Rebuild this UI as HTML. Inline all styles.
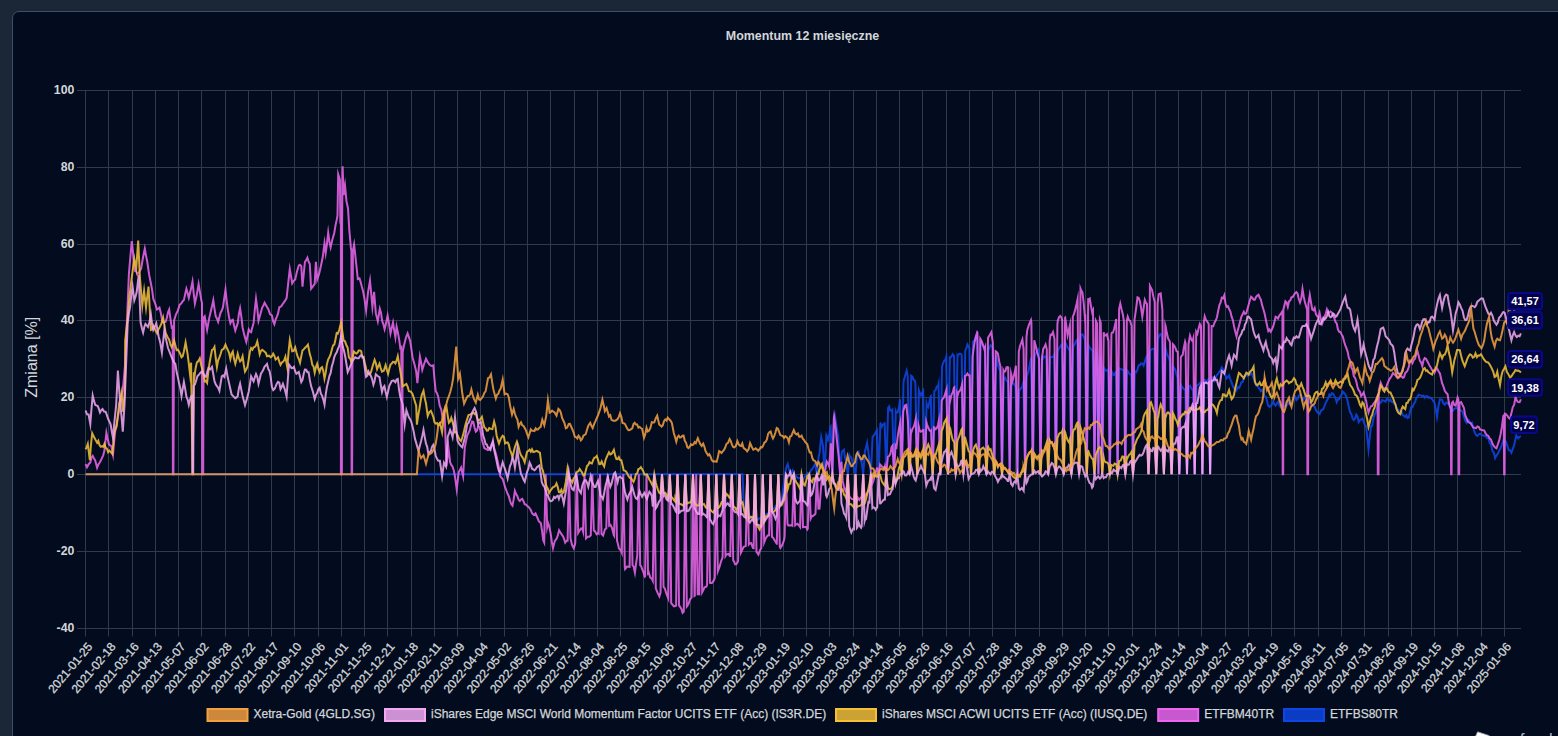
<!DOCTYPE html>
<html lang="pl"><head><meta charset="utf-8"><title>Momentum 12 miesięczne</title>
<style>
html,body{margin:0;padding:0;background:#1b2736;overflow:hidden}
body{width:1558px;height:736px;position:relative;font-family:"Liberation Sans",Arial,sans-serif}
.card{position:absolute;left:12px;top:11px;width:1600px;height:800px;box-sizing:border-box;border:1px solid #3f4f63;border-radius:7px;background:#020c1e}
svg{position:absolute;left:0;top:0}
text{font-family:"Liberation Sans",Arial,sans-serif}
.yt{font-size:12.3px;fill:#d3d6da;font-weight:bold}
.xt{font-size:12px;fill:#d3d6da;stroke:#d3d6da;stroke-width:0.3px}
.lg{font-size:12px;fill:#d3d6da;stroke:#d3d6da;stroke-width:0.25px}
.tt{font-size:12.45px;font-weight:bold;fill:#d3d6da}
  .ya{font-size:16px;fill:#d3d6da}
.lb{font-size:11px;font-weight:bold;fill:#fff}
.logo{position:absolute;left:1478px;top:730px;font-size:17px;color:#aeb4bb;white-space:nowrap;line-height:17px}
.logo b{color:#d89a20;font-weight:normal}
</style></head><body>
<div class="card"></div>
<svg width="1558" height="736" viewBox="0 0 1558 736">
<defs><filter id="bl" x="0" y="0" width="1558" height="736" filterUnits="userSpaceOnUse"><feGaussianBlur stdDeviation="0.45"/></filter></defs>
<line x1="85.5" y1="90" x2="85.5" y2="636.5" stroke="#2f3b4b" stroke-width="1"/>
<line x1="108.5" y1="90" x2="108.5" y2="636.5" stroke="#2f3b4b" stroke-width="1"/>
<line x1="132.5" y1="90" x2="132.5" y2="636.5" stroke="#2f3b4b" stroke-width="1"/>
<line x1="155.5" y1="90" x2="155.5" y2="636.5" stroke="#2f3b4b" stroke-width="1"/>
<line x1="178.5" y1="90" x2="178.5" y2="636.5" stroke="#2f3b4b" stroke-width="1"/>
<line x1="201.5" y1="90" x2="201.5" y2="636.5" stroke="#2f3b4b" stroke-width="1"/>
<line x1="225.5" y1="90" x2="225.5" y2="636.5" stroke="#2f3b4b" stroke-width="1"/>
<line x1="248.5" y1="90" x2="248.5" y2="636.5" stroke="#2f3b4b" stroke-width="1"/>
<line x1="271.5" y1="90" x2="271.5" y2="636.5" stroke="#2f3b4b" stroke-width="1"/>
<line x1="294.5" y1="90" x2="294.5" y2="636.5" stroke="#2f3b4b" stroke-width="1"/>
<line x1="318.5" y1="90" x2="318.5" y2="636.5" stroke="#2f3b4b" stroke-width="1"/>
<line x1="341.5" y1="90" x2="341.5" y2="636.5" stroke="#2f3b4b" stroke-width="1"/>
<line x1="364.5" y1="90" x2="364.5" y2="636.5" stroke="#2f3b4b" stroke-width="1"/>
<line x1="387.5" y1="90" x2="387.5" y2="636.5" stroke="#2f3b4b" stroke-width="1"/>
<line x1="411.5" y1="90" x2="411.5" y2="636.5" stroke="#2f3b4b" stroke-width="1"/>
<line x1="434.5" y1="90" x2="434.5" y2="636.5" stroke="#2f3b4b" stroke-width="1"/>
<line x1="457.5" y1="90" x2="457.5" y2="636.5" stroke="#2f3b4b" stroke-width="1"/>
<line x1="480.5" y1="90" x2="480.5" y2="636.5" stroke="#2f3b4b" stroke-width="1"/>
<line x1="504.5" y1="90" x2="504.5" y2="636.5" stroke="#2f3b4b" stroke-width="1"/>
<line x1="527.5" y1="90" x2="527.5" y2="636.5" stroke="#2f3b4b" stroke-width="1"/>
<line x1="550.5" y1="90" x2="550.5" y2="636.5" stroke="#2f3b4b" stroke-width="1"/>
<line x1="574.5" y1="90" x2="574.5" y2="636.5" stroke="#2f3b4b" stroke-width="1"/>
<line x1="597.5" y1="90" x2="597.5" y2="636.5" stroke="#2f3b4b" stroke-width="1"/>
<line x1="620.5" y1="90" x2="620.5" y2="636.5" stroke="#2f3b4b" stroke-width="1"/>
<line x1="643.5" y1="90" x2="643.5" y2="636.5" stroke="#2f3b4b" stroke-width="1"/>
<line x1="667.5" y1="90" x2="667.5" y2="636.5" stroke="#2f3b4b" stroke-width="1"/>
<line x1="690.5" y1="90" x2="690.5" y2="636.5" stroke="#2f3b4b" stroke-width="1"/>
<line x1="713.5" y1="90" x2="713.5" y2="636.5" stroke="#2f3b4b" stroke-width="1"/>
<line x1="736.5" y1="90" x2="736.5" y2="636.5" stroke="#2f3b4b" stroke-width="1"/>
<line x1="760.5" y1="90" x2="760.5" y2="636.5" stroke="#2f3b4b" stroke-width="1"/>
<line x1="783.5" y1="90" x2="783.5" y2="636.5" stroke="#2f3b4b" stroke-width="1"/>
<line x1="806.5" y1="90" x2="806.5" y2="636.5" stroke="#2f3b4b" stroke-width="1"/>
<line x1="829.5" y1="90" x2="829.5" y2="636.5" stroke="#2f3b4b" stroke-width="1"/>
<line x1="853.5" y1="90" x2="853.5" y2="636.5" stroke="#2f3b4b" stroke-width="1"/>
<line x1="876.5" y1="90" x2="876.5" y2="636.5" stroke="#2f3b4b" stroke-width="1"/>
<line x1="899.5" y1="90" x2="899.5" y2="636.5" stroke="#2f3b4b" stroke-width="1"/>
<line x1="922.5" y1="90" x2="922.5" y2="636.5" stroke="#2f3b4b" stroke-width="1"/>
<line x1="946.5" y1="90" x2="946.5" y2="636.5" stroke="#2f3b4b" stroke-width="1"/>
<line x1="969.5" y1="90" x2="969.5" y2="636.5" stroke="#2f3b4b" stroke-width="1"/>
<line x1="992.5" y1="90" x2="992.5" y2="636.5" stroke="#2f3b4b" stroke-width="1"/>
<line x1="1015.5" y1="90" x2="1015.5" y2="636.5" stroke="#2f3b4b" stroke-width="1"/>
<line x1="1039.5" y1="90" x2="1039.5" y2="636.5" stroke="#2f3b4b" stroke-width="1"/>
<line x1="1062.5" y1="90" x2="1062.5" y2="636.5" stroke="#2f3b4b" stroke-width="1"/>
<line x1="1085.5" y1="90" x2="1085.5" y2="636.5" stroke="#2f3b4b" stroke-width="1"/>
<line x1="1108.5" y1="90" x2="1108.5" y2="636.5" stroke="#2f3b4b" stroke-width="1"/>
<line x1="1132.5" y1="90" x2="1132.5" y2="636.5" stroke="#2f3b4b" stroke-width="1"/>
<line x1="1155.5" y1="90" x2="1155.5" y2="636.5" stroke="#2f3b4b" stroke-width="1"/>
<line x1="1178.5" y1="90" x2="1178.5" y2="636.5" stroke="#2f3b4b" stroke-width="1"/>
<line x1="1201.5" y1="90" x2="1201.5" y2="636.5" stroke="#2f3b4b" stroke-width="1"/>
<line x1="1225.5" y1="90" x2="1225.5" y2="636.5" stroke="#2f3b4b" stroke-width="1"/>
<line x1="1248.5" y1="90" x2="1248.5" y2="636.5" stroke="#2f3b4b" stroke-width="1"/>
<line x1="1271.5" y1="90" x2="1271.5" y2="636.5" stroke="#2f3b4b" stroke-width="1"/>
<line x1="1294.5" y1="90" x2="1294.5" y2="636.5" stroke="#2f3b4b" stroke-width="1"/>
<line x1="1318.5" y1="90" x2="1318.5" y2="636.5" stroke="#2f3b4b" stroke-width="1"/>
<line x1="1341.5" y1="90" x2="1341.5" y2="636.5" stroke="#2f3b4b" stroke-width="1"/>
<line x1="1364.5" y1="90" x2="1364.5" y2="636.5" stroke="#2f3b4b" stroke-width="1"/>
<line x1="1388.5" y1="90" x2="1388.5" y2="636.5" stroke="#2f3b4b" stroke-width="1"/>
<line x1="1411.5" y1="90" x2="1411.5" y2="636.5" stroke="#2f3b4b" stroke-width="1"/>
<line x1="1434.5" y1="90" x2="1434.5" y2="636.5" stroke="#2f3b4b" stroke-width="1"/>
<line x1="1457.5" y1="90" x2="1457.5" y2="636.5" stroke="#2f3b4b" stroke-width="1"/>
<line x1="1481.5" y1="90" x2="1481.5" y2="636.5" stroke="#2f3b4b" stroke-width="1"/>
<line x1="1504.5" y1="90" x2="1504.5" y2="636.5" stroke="#2f3b4b" stroke-width="1"/>
<line x1="77" y1="90.5" x2="1521.0" y2="90.5" stroke="#2f3b4b" stroke-width="1"/>
<text x="74.4" y="94.0" text-anchor="end" class="yt">100</text>
<line x1="77" y1="167.5" x2="1521.0" y2="167.5" stroke="#2f3b4b" stroke-width="1"/>
<text x="74.4" y="171.0" text-anchor="end" class="yt">80</text>
<line x1="77" y1="244.5" x2="1521.0" y2="244.5" stroke="#2f3b4b" stroke-width="1"/>
<text x="74.4" y="248.0" text-anchor="end" class="yt">60</text>
<line x1="77" y1="320.5" x2="1521.0" y2="320.5" stroke="#2f3b4b" stroke-width="1"/>
<text x="74.4" y="324.0" text-anchor="end" class="yt">40</text>
<line x1="77" y1="397.5" x2="1521.0" y2="397.5" stroke="#2f3b4b" stroke-width="1"/>
<text x="74.4" y="401.0" text-anchor="end" class="yt">20</text>
<line x1="77" y1="474.5" x2="1521.0" y2="474.5" stroke="#2f3b4b" stroke-width="1"/>
<text x="74.4" y="478.0" text-anchor="end" class="yt">0</text>
<line x1="77" y1="551.5" x2="1521.0" y2="551.5" stroke="#2f3b4b" stroke-width="1"/>
<text x="74.4" y="555.0" text-anchor="end" class="yt">-20</text>
<line x1="77" y1="628.5" x2="1521.0" y2="628.5" stroke="#2f3b4b" stroke-width="1"/>
<text x="74.4" y="632.0" text-anchor="end" class="yt">-40</text>
<text class="xt" text-anchor="end" transform="translate(93.1,647.0) rotate(-50)">2021-01-25</text>
<text class="xt" text-anchor="end" transform="translate(116.4,647.0) rotate(-50)">2021-02-18</text>
<text class="xt" text-anchor="end" transform="translate(139.6,647.0) rotate(-50)">2021-03-16</text>
<text class="xt" text-anchor="end" transform="translate(162.9,647.0) rotate(-50)">2021-04-13</text>
<text class="xt" text-anchor="end" transform="translate(186.1,647.0) rotate(-50)">2021-05-07</text>
<text class="xt" text-anchor="end" transform="translate(209.4,647.0) rotate(-50)">2021-06-02</text>
<text class="xt" text-anchor="end" transform="translate(232.6,647.0) rotate(-50)">2021-06-28</text>
<text class="xt" text-anchor="end" transform="translate(255.9,647.0) rotate(-50)">2021-07-22</text>
<text class="xt" text-anchor="end" transform="translate(279.2,647.0) rotate(-50)">2021-08-17</text>
<text class="xt" text-anchor="end" transform="translate(302.4,647.0) rotate(-50)">2021-09-10</text>
<text class="xt" text-anchor="end" transform="translate(325.7,647.0) rotate(-50)">2021-10-06</text>
<text class="xt" text-anchor="end" transform="translate(348.9,647.0) rotate(-50)">2021-11-01</text>
<text class="xt" text-anchor="end" transform="translate(372.2,647.0) rotate(-50)">2021-11-25</text>
<text class="xt" text-anchor="end" transform="translate(395.4,647.0) rotate(-50)">2021-12-21</text>
<text class="xt" text-anchor="end" transform="translate(418.7,647.0) rotate(-50)">2022-01-18</text>
<text class="xt" text-anchor="end" transform="translate(442.0,647.0) rotate(-50)">2022-02-11</text>
<text class="xt" text-anchor="end" transform="translate(465.2,647.0) rotate(-50)">2022-03-09</text>
<text class="xt" text-anchor="end" transform="translate(488.5,647.0) rotate(-50)">2022-04-04</text>
<text class="xt" text-anchor="end" transform="translate(511.7,647.0) rotate(-50)">2022-05-02</text>
<text class="xt" text-anchor="end" transform="translate(535.0,647.0) rotate(-50)">2022-05-26</text>
<text class="xt" text-anchor="end" transform="translate(558.2,647.0) rotate(-50)">2022-06-21</text>
<text class="xt" text-anchor="end" transform="translate(581.5,647.0) rotate(-50)">2022-07-14</text>
<text class="xt" text-anchor="end" transform="translate(604.8,647.0) rotate(-50)">2022-08-04</text>
<text class="xt" text-anchor="end" transform="translate(628.0,647.0) rotate(-50)">2022-08-25</text>
<text class="xt" text-anchor="end" transform="translate(651.3,647.0) rotate(-50)">2022-09-15</text>
<text class="xt" text-anchor="end" transform="translate(674.5,647.0) rotate(-50)">2022-10-06</text>
<text class="xt" text-anchor="end" transform="translate(697.8,647.0) rotate(-50)">2022-10-27</text>
<text class="xt" text-anchor="end" transform="translate(721.0,647.0) rotate(-50)">2022-11-17</text>
<text class="xt" text-anchor="end" transform="translate(744.3,647.0) rotate(-50)">2022-12-08</text>
<text class="xt" text-anchor="end" transform="translate(767.6,647.0) rotate(-50)">2022-12-29</text>
<text class="xt" text-anchor="end" transform="translate(790.8,647.0) rotate(-50)">2023-01-19</text>
<text class="xt" text-anchor="end" transform="translate(814.1,647.0) rotate(-50)">2023-02-10</text>
<text class="xt" text-anchor="end" transform="translate(837.3,647.0) rotate(-50)">2023-03-03</text>
<text class="xt" text-anchor="end" transform="translate(860.6,647.0) rotate(-50)">2023-03-24</text>
<text class="xt" text-anchor="end" transform="translate(883.9,647.0) rotate(-50)">2023-04-14</text>
<text class="xt" text-anchor="end" transform="translate(907.1,647.0) rotate(-50)">2023-05-05</text>
<text class="xt" text-anchor="end" transform="translate(930.4,647.0) rotate(-50)">2023-05-26</text>
<text class="xt" text-anchor="end" transform="translate(953.6,647.0) rotate(-50)">2023-06-16</text>
<text class="xt" text-anchor="end" transform="translate(976.9,647.0) rotate(-50)">2023-07-07</text>
<text class="xt" text-anchor="end" transform="translate(1000.1,647.0) rotate(-50)">2023-07-28</text>
<text class="xt" text-anchor="end" transform="translate(1023.4,647.0) rotate(-50)">2023-08-18</text>
<text class="xt" text-anchor="end" transform="translate(1046.7,647.0) rotate(-50)">2023-09-08</text>
<text class="xt" text-anchor="end" transform="translate(1069.9,647.0) rotate(-50)">2023-09-29</text>
<text class="xt" text-anchor="end" transform="translate(1093.2,647.0) rotate(-50)">2023-10-20</text>
<text class="xt" text-anchor="end" transform="translate(1116.4,647.0) rotate(-50)">2023-11-10</text>
<text class="xt" text-anchor="end" transform="translate(1139.7,647.0) rotate(-50)">2023-12-01</text>
<text class="xt" text-anchor="end" transform="translate(1162.9,647.0) rotate(-50)">2023-12-24</text>
<text class="xt" text-anchor="end" transform="translate(1186.2,647.0) rotate(-50)">2024-01-14</text>
<text class="xt" text-anchor="end" transform="translate(1209.5,647.0) rotate(-50)">2024-02-04</text>
<text class="xt" text-anchor="end" transform="translate(1232.7,647.0) rotate(-50)">2024-02-27</text>
<text class="xt" text-anchor="end" transform="translate(1256.0,647.0) rotate(-50)">2024-03-22</text>
<text class="xt" text-anchor="end" transform="translate(1279.2,647.0) rotate(-50)">2024-04-19</text>
<text class="xt" text-anchor="end" transform="translate(1302.5,647.0) rotate(-50)">2024-05-16</text>
<text class="xt" text-anchor="end" transform="translate(1325.7,647.0) rotate(-50)">2024-06-11</text>
<text class="xt" text-anchor="end" transform="translate(1349.0,647.0) rotate(-50)">2024-07-05</text>
<text class="xt" text-anchor="end" transform="translate(1372.3,647.0) rotate(-50)">2024-07-31</text>
<text class="xt" text-anchor="end" transform="translate(1395.5,647.0) rotate(-50)">2024-08-26</text>
<text class="xt" text-anchor="end" transform="translate(1418.8,647.0) rotate(-50)">2024-09-19</text>
<text class="xt" text-anchor="end" transform="translate(1442.0,647.0) rotate(-50)">2024-10-15</text>
<text class="xt" text-anchor="end" transform="translate(1465.3,647.0) rotate(-50)">2024-11-08</text>
<text class="xt" text-anchor="end" transform="translate(1488.5,647.0) rotate(-50)">2024-12-04</text>
<text class="xt" text-anchor="end" transform="translate(1511.8,647.0) rotate(-50)">2025-01-06</text>
<g filter="url(#bl)">
<polyline fill="none" stroke="#0e46e6" stroke-width="2" stroke-opacity="0.86" stroke-linejoin="miter" stroke-miterlimit="10" points="85.6,474.3 742.5,474.3 744.0,510.9 745.4,512.8 746.9,513.9 748.4,514.0 749.8,516.1 751.3,517.2 752.8,518.8 754.2,518.2 755.7,519.7 757.2,520.5 758.6,518.5 760.1,518.5 761.6,517.5 763.0,517.4 764.5,514.4 766.1,514.0 767.8,513.8 769.4,511.4 771.0,510.6 772.6,509.6 774.3,508.1 775.7,505.9 777.2,506.8 778.7,504.2 780.1,502.5 781.6,500.5 783.4,486.6 785.3,472.4 786.5,466.9 787.7,464.0 788.9,469.3 790.2,472.5 791.4,472.9 792.6,470.3 794.4,474.3 796.3,476.3 797.9,478.1 799.5,477.9 801.2,479.2 803.0,479.4 804.8,476.8 806.7,474.0 807.5,473.0 809.2,474.3 811.0,470.2 812.2,469.1 814.0,465.9 815.2,463.6 816.9,474.3 818.7,456.5 819.5,453.6 821.2,437.0 822.9,445.1 824.6,474.3 826.4,435.2 826.8,436.1 828.0,439.6 829.2,434.7 830.5,426.1 830.6,426.0 832.4,474.3 834.1,417.4 834.9,415.2 836.6,427.1 837.8,434.2 838.3,437.5 840.1,474.3 841.8,451.9 842.7,450.6 843.9,449.6 845.1,458.2 846.0,460.5 847.8,474.3 849.5,455.6 850.0,456.8 851.2,457.2 852.5,461.7 853.7,467.0 853.7,466.8 855.5,474.3 857.2,453.2 857.4,453.0 858.6,451.8 859.8,457.9 861.0,460.9 861.4,460.1 863.2,474.3 864.9,451.5 865.9,447.8 867.1,442.9 868.4,452.2 869.1,458.4 870.9,474.3 872.6,436.6 873.3,436.2 874.5,434.6 875.7,432.3 876.9,430.2 878.6,474.3 880.4,423.8 880.6,423.6 881.8,426.7 883.0,424.4 884.3,424.1 884.6,422.3 886.3,474.3 888.1,408.0 889.1,406.4 890.4,410.7 891.6,410.6 892.3,409.8 894.0,474.3 895.8,411.3 896.5,413.1 897.7,412.4 898.9,407.6 900.0,399.3 901.7,474.3 903.5,382.0 903.8,380.2 905.3,375.3 906.7,370.6 907.7,375.8 909.5,474.3 911.2,375.7 912.4,376.6 913.6,380.0 914.8,380.5 915.4,383.2 917.2,474.3 918.9,390.5 919.7,393.0 920.9,395.3 922.2,392.8 923.1,391.0 924.9,474.3 926.6,403.6 927.0,405.2 928.3,407.1 929.5,401.4 930.7,396.3 930.8,396.2 932.6,474.3 934.3,391.1 934.4,391.0 935.6,390.3 936.8,386.5 938.0,386.4 938.5,384.2 940.3,474.3 942.0,367.1 942.9,363.6 944.2,360.8 945.4,359.7 946.2,357.0 948.0,474.3 949.8,357.6 950.3,358.0 951.5,356.3 952.7,354.2 953.9,356.1 954.0,356.1 955.7,474.3 957.5,356.2 957.6,356.4 958.8,354.2 960.0,353.6 961.3,354.2 961.7,355.4 963.4,474.3 965.2,351.1 966.2,348.7 967.4,344.5 968.6,346.8 969.4,348.0 971.1,474.3 972.9,341.8 973.5,341.2 974.7,340.0 975.9,336.4 977.1,334.1 978.8,474.3 980.6,342.9 980.8,343.3 982.1,344.1 983.3,345.5 984.5,346.5 984.8,346.7 986.5,474.3 988.3,350.3 989.4,348.0 990.6,345.2 991.8,346.2 992.5,347.2 994.3,474.3 996.0,355.3 996.7,359.2 997.9,365.6 999.2,368.6 1000.2,371.5 1002.0,474.3 1003.7,377.8 1004.1,379.1 1005.3,377.9 1006.5,380.6 1007.7,381.7 1007.9,382.1 1009.7,474.3 1011.4,385.7 1012.6,383.7 1013.8,383.4 1015.1,385.8 1015.6,387.1 1017.4,474.3 1019.1,390.5 1020.0,389.5 1021.2,388.2 1022.4,386.3 1023.3,382.2 1025.1,474.3 1026.8,375.8 1027.3,375.3 1028.5,371.4 1029.7,364.9 1031.0,358.6 1031.1,358.6 1032.8,474.3 1034.6,356.3 1034.6,356.3 1035.8,353.6 1037.1,351.7 1038.3,349.3 1038.8,350.3 1040.5,474.3 1042.3,357.2 1043.2,358.4 1044.4,356.5 1045.6,356.4 1046.5,358.7 1048.2,474.3 1050.0,357.3 1050.5,357.4 1051.7,357.1 1053.0,357.0 1054.2,354.6 1054.2,354.6 1055.9,474.3 1057.7,351.6 1057.8,351.4 1059.1,348.1 1060.3,346.6 1061.5,344.7 1061.9,344.6 1063.7,474.3 1065.4,342.8 1066.4,345.0 1067.6,347.0 1068.9,349.5 1069.6,349.4 1071.4,474.3 1073.1,346.3 1073.7,345.9 1075.0,343.9 1076.2,340.6 1077.3,339.6 1079.1,474.3 1080.8,334.9 1081.1,334.8 1082.3,334.2 1083.5,336.3 1084.7,339.3 1085.0,340.2 1086.8,474.3 1088.5,345.3 1089.6,347.5 1090.9,348.8 1092.1,350.4 1092.7,351.2 1094.5,474.3 1096.2,352.2 1096.7,352.8 1098.4,474.3 1100.2,355.5 1100.5,357.2 1102.2,474.3 1104.0,368.1 1104.4,368.9 1105.7,370.3 1106.9,370.8 1108.1,369.5 1108.2,369.4 1109.9,474.3 1111.7,371.5 1111.8,371.7 1113.0,374.4 1114.2,374.9 1115.5,372.2 1115.9,371.9 1117.6,474.3 1119.4,368.4 1120.3,368.9 1121.6,369.3 1122.8,369.8 1123.6,371.0 1125.3,474.3 1127.1,370.5 1127.7,371.0 1128.9,373.0 1130.1,374.5 1131.3,374.5 1133.0,474.3 1134.8,371.2 1135.0,371.4 1136.2,372.3 1137.5,369.3 1138.7,365.3 1139.9,365.3 1141.1,363.3 1142.3,363.5 1143.6,365.6 1144.8,361.5 1146.0,357.9 1146.7,356.4 1148.5,474.3 1150.2,351.0 1150.9,350.1 1152.1,348.9 1153.3,348.9 1154.4,348.4 1156.2,474.3 1157.9,339.1 1158.2,338.5 1159.5,334.7 1160.7,334.0 1161.9,337.4 1162.1,338.1 1163.9,474.3 1165.6,348.5 1166.8,353.0 1168.0,356.2 1169.2,358.8 1169.8,360.8 1171.6,474.3 1173.3,366.7 1174.1,368.2 1175.4,369.9 1176.6,375.1 1177.5,377.4 1179.3,474.3 1181.0,385.1 1181.5,386.0 1182.7,387.7 1183.9,388.9 1185.1,389.8 1185.3,389.7 1187.0,474.3 1188.8,387.1 1188.8,387.1 1190.0,385.7 1191.2,387.9 1192.5,389.8 1193.0,389.7 1194.7,474.3 1196.5,385.4 1197.4,385.3 1198.6,384.5 1199.8,383.0 1200.7,382.3 1202.4,474.3 1204.2,379.7 1204.7,379.8 1205.9,382.1 1207.1,380.8 1208.4,379.4 1208.4,379.4 1210.1,474.3 1211.9,377.8 1212.0,377.5 1213.3,377.3 1214.5,380.4 1215.7,377.7 1216.9,375.1 1218.1,373.9 1219.4,371.6 1220.6,370.2 1221.8,367.4 1223.0,369.4 1224.3,373.2 1225.5,375.3 1226.7,378.4 1227.9,377.2 1229.1,375.3 1230.4,379.6 1231.6,382.3 1232.8,386.0 1234.0,388.3 1235.3,388.4 1236.5,390.3 1237.7,387.0 1238.9,388.0 1240.1,386.1 1241.4,382.2 1242.6,382.1 1243.8,377.9 1245.0,374.7 1246.3,374.7 1247.5,375.7 1248.7,374.0 1249.9,374.7 1251.1,372.2 1252.4,375.2 1253.6,378.3 1254.8,380.7 1256.0,385.5 1257.3,386.0 1258.5,387.7 1259.7,389.1 1260.9,391.1 1262.2,389.9 1263.4,392.8 1264.6,396.3 1265.8,396.8 1267.0,401.1 1268.3,405.8 1269.5,407.0 1270.7,405.7 1271.9,404.4 1273.2,401.4 1274.4,404.4 1275.6,405.6 1276.8,403.5 1278.0,401.8 1279.3,405.0 1280.5,406.9 1281.7,405.0 1282.9,404.6 1284.2,406.4 1285.4,406.7 1286.6,405.9 1287.8,401.4 1289.0,403.9 1290.3,404.5 1291.5,403.9 1292.7,399.5 1293.9,397.9 1295.2,396.7 1296.4,400.1 1297.6,398.9 1298.8,395.6 1300.0,394.8 1301.3,396.3 1302.5,400.5 1303.7,399.0 1304.9,396.4 1306.2,399.4 1307.4,401.5 1308.6,401.6 1309.8,402.5 1311.1,403.4 1312.3,404.8 1313.5,406.1 1314.7,406.8 1315.9,410.0 1317.2,412.1 1318.4,413.2 1319.6,414.1 1320.8,410.9 1322.1,409.7 1323.3,409.2 1324.5,406.0 1325.7,402.9 1326.9,400.5 1328.2,398.3 1329.4,394.6 1330.6,395.7 1331.8,393.2 1333.1,393.5 1334.3,395.9 1335.5,398.1 1336.7,402.1 1337.9,399.3 1339.2,399.3 1340.4,396.1 1341.6,394.8 1342.8,391.7 1344.1,393.0 1345.3,394.5 1346.5,397.1 1347.7,401.6 1348.9,407.5 1350.2,412.4 1351.4,414.3 1352.6,418.6 1353.8,420.1 1355.1,418.4 1356.3,414.6 1357.5,416.5 1358.7,422.1 1360.0,420.1 1361.2,419.5 1362.4,418.6 1363.6,421.7 1364.8,424.5 1366.1,426.2 1367.3,438.0 1368.5,449.5 1369.7,437.9 1371.0,426.4 1372.2,425.6 1373.4,418.3 1374.6,414.7 1375.8,412.2 1377.1,407.7 1378.3,403.6 1379.5,403.8 1380.7,402.7 1382.0,400.2 1383.2,400.5 1384.4,401.0 1385.6,401.6 1386.8,398.8 1388.1,399.8 1389.3,400.9 1390.5,399.6 1391.7,401.8 1393.0,402.2 1394.2,403.7 1395.4,404.4 1396.6,408.3 1397.8,409.2 1399.1,410.9 1400.3,411.0 1401.5,411.6 1402.7,415.3 1404.0,415.8 1405.2,417.0 1406.4,415.2 1407.6,418.1 1408.9,417.3 1410.1,411.3 1411.3,407.0 1412.5,407.1 1413.7,404.1 1415.0,402.1 1416.2,398.5 1417.4,396.7 1418.6,394.8 1419.9,395.2 1421.1,395.5 1422.3,396.5 1423.5,395.6 1424.7,397.6 1426.0,396.3 1427.2,396.2 1428.4,397.8 1429.6,397.4 1430.9,398.2 1432.1,399.0 1433.3,401.1 1434.5,402.6 1435.7,408.9 1437.0,416.9 1438.4,406.5 1439.9,399.2 1442.1,399.8 1443.5,403.7 1444.8,404.8 1446.2,402.5 1447.6,403.5 1448.9,404.0 1450.3,407.6 1451.6,411.2 1453.0,410.6 1454.3,408.9 1455.7,408.2 1457.1,408.0 1458.4,409.2 1459.8,410.0 1461.1,410.7 1462.5,411.6 1463.9,416.2 1465.2,420.9 1466.6,422.9 1467.9,419.7 1469.3,420.9 1470.7,423.6 1472.0,422.7 1473.4,428.2 1474.7,432.4 1476.1,435.2 1477.4,435.9 1478.8,434.3 1480.2,433.7 1481.5,434.9 1482.9,435.2 1484.2,435.9 1485.6,436.0 1487.0,438.1 1488.3,437.8 1489.7,442.8 1491.0,444.5 1492.4,450.9 1493.8,452.7 1495.1,458.1 1496.5,455.2 1497.8,454.0 1499.2,450.7 1500.5,448.3 1501.9,444.6 1503.3,440.5 1504.6,440.8 1506.0,441.8 1507.3,445.6 1508.7,450.1 1510.1,450.3 1511.4,452.8 1512.8,448.8 1514.1,445.3 1516.3,435.5 1518.2,438.4 1519.6,436.8 1520.9,436.2"/>
<polyline fill="none" stroke="#ee66ee" stroke-width="2" stroke-opacity="0.86" stroke-linejoin="miter" stroke-miterlimit="10" points="85.6,464.2 87.0,467.2 88.6,464.2 90.3,462.6 91.5,457.5 92.7,455.9 93.9,458.3 95.2,460.4 97.1,467.8 98.3,464.6 99.6,462.8 100.8,460.6 102.0,457.9 103.2,455.3 104.4,450.8 106.4,432.6 107.6,438.5 108.9,444.2 110.1,445.4 111.3,446.1 113.0,454.5 114.2,440.9 115.5,428.7 116.7,423.5 117.9,416.8 119.1,410.8 120.3,405.0 121.6,396.1 122.8,389.9 124.0,377.4 125.2,363.1 125.2,361.3 127.1,317.7 128.9,274.0 130.4,256.4 131.8,241.1 133.4,256.0 135.0,271.0 136.2,271.3 137.5,274.3 139.3,271.8 141.1,268.6 143.0,257.5 144.8,248.7 146.0,255.6 147.2,261.5 149.1,274.4 150.9,283.5 152.1,289.9 153.3,298.9 155.2,303.6 157.0,309.5 158.2,308.8 159.5,307.6 160.7,312.4 161.9,319.0 163.1,322.5 164.4,322.3 165.6,321.8 166.8,318.0 168.0,312.4 169.2,309.5 170.5,319.1 171.7,327.3 172.7,326.7 172.9,474.3 173.4,474.3 174.1,320.5 176.0,314.3 177.8,310.8 179.6,304.9 181.5,303.2 182.7,301.2 183.9,300.1 185.1,294.4 186.4,288.7 187.6,292.9 188.8,297.8 190.6,290.6 192.5,281.6 193.7,293.4 194.9,303.5 196.7,295.3 198.6,284.1 199.8,291.4 201.0,298.5 202.0,303.3 202.2,474.3 203.2,474.3 203.7,317.3 204.7,316.2 205.9,323.4 207.1,330.0 209.0,319.1 210.8,311.3 212.0,306.3 213.3,300.2 214.5,308.8 215.7,316.4 216.9,318.5 218.1,321.8 219.4,316.9 220.6,312.7 221.8,310.5 223.0,307.2 224.3,297.9 225.5,289.7 226.7,301.0 227.9,310.4 229.1,317.5 230.4,323.2 231.6,320.5 232.8,319.8 234.0,325.2 235.3,330.5 236.5,326.8 237.7,323.4 238.9,314.0 240.1,308.4 241.4,317.2 242.6,327.7 244.4,335.4 246.3,341.9 247.5,336.0 248.7,329.6 249.9,331.6 251.1,332.2 252.4,327.2 253.6,322.9 254.8,309.9 256.0,298.9 257.3,308.7 258.5,320.8 260.3,314.5 262.2,307.6 263.4,305.5 264.6,302.8 266.4,305.9 268.3,309.2 270.1,314.3 271.9,315.3 273.2,321.4 274.4,324.2 275.6,319.6 276.8,316.8 278.0,313.7 279.3,307.2 281.1,306.5 282.9,303.7 284.8,301.2 286.6,298.2 288.2,283.4 289.8,269.1 291.0,276.0 292.2,283.4 293.7,280.8 295.2,279.4 297.0,271.4 298.8,265.5 300.0,264.7 301.3,266.2 302.5,286.7 303.7,274.3 304.9,262.0 306.2,260.2 307.4,257.8 308.6,261.7 309.8,264.0 311.1,288.7 312.9,286.4 314.7,283.9 315.9,261.7 317.2,279.4 319.0,274.1 320.8,266.5 322.7,257.3 324.5,243.2 325.7,252.9 326.9,244.3 328.2,232.6 329.4,241.7 330.6,247.3 332.4,239.5 334.3,232.7 335.5,225.4 336.7,219.9 337.5,215.7 338.2,174.3 339.9,179.7 340.4,223.1 340.9,223.5 340.9,474.3 341.9,474.3 342.1,223.1 342.6,166.3 343.6,195.1 345.0,185.4 346.5,201.4 348.0,208.2 349.4,231.2 350.9,247.9 351.4,250.9 351.6,474.3 352.1,474.3 352.9,250.7 354.1,244.4 355.8,260.0 357.8,279.1 359.5,278.3 360.7,282.2 361.9,287.0 363.1,291.3 364.4,298.2 366.1,310.6 368.0,292.4 370.0,280.6 371.2,293.4 372.4,306.9 374.1,291.8 375.8,313.2 377.8,321.3 379.8,308.8 381.0,312.8 382.2,321.2 383.4,324.3 384.6,329.3 386.1,323.1 387.6,315.6 389.0,323.7 390.5,333.6 391.7,328.1 393.0,322.5 394.2,330.4 395.4,337.4 396.6,326.6 397.8,332.1 399.1,339.2 400.3,348.2 401.3,347.2 401.5,474.3 402.0,474.3 402.7,352.0 404.0,345.4 405.2,340.4 406.4,336.3 407.6,333.4 408.9,337.1 410.1,340.7 411.3,348.3 412.5,357.2 414.4,363.9 416.2,371.6 417.4,383.1 418.6,369.9 419.9,356.6 421.1,362.5 422.3,369.8 424.1,364.0 426.0,358.8 427.8,362.2 429.6,364.8 431.5,366.0 433.3,365.3 434.5,379.3 435.7,391.1 437.0,393.1 438.2,396.7 439.7,405.7 441.3,409.7 442.8,418.9 444.5,411.1 446.5,466.5 448.4,447.5 450.1,462.2 451.3,464.9 452.6,466.7 453.8,470.4 455.0,476.7 456.7,489.3 458.7,472.2 459.9,470.1 461.1,467.5 463.1,476.2 464.8,447.3 466.0,441.6 467.2,435.6 468.5,432.9 469.7,430.5 470.9,425.5 472.1,421.5 473.3,421.8 474.6,427.8 475.8,431.6 477.0,430.4 478.2,426.5 479.5,426.6 480.7,431.8 481.9,439.7 483.1,443.9 484.4,448.2 486.2,449.1 488.0,450.1 489.2,449.7 490.5,447.5 491.7,444.0 492.9,442.4 494.1,447.7 495.4,452.1 496.6,456.4 497.8,461.9 499.0,467.8 500.2,476.2 501.5,477.8 502.7,479.0 503.9,482.9 505.1,487.2 506.4,490.5 507.6,493.8 508.8,496.2 510.0,500.6 511.2,504.0 512.5,505.6 513.7,499.2 514.9,490.9 516.1,494.0 517.4,496.2 518.6,499.8 519.8,501.0 521.0,499.5 522.2,498.8 523.5,501.2 524.7,504.4 525.9,504.5 527.1,505.8 529.0,507.5 530.8,509.9 532.2,513.5 533.9,514.9 535.5,513.5 537.1,517.0 538.9,521.4 540.8,523.1 542.0,530.4 543.2,540.3 544.2,542.5 545.7,474.3 547.2,527.0 548.1,523.1 549.3,526.5 550.6,533.1 551.8,541.7 553.0,548.1 554.8,541.1 556.7,538.5 557.9,535.1 559.1,530.3 561.0,533.4 562.8,536.1 564.0,538.7 565.2,542.7 566.9,540.5 567.6,540.6 569.0,474.3 570.5,538.4 572.0,544.8 573.8,548.3 575.0,544.3 575.3,542.3 576.8,474.3 578.2,532.9 579.5,530.6 581.1,528.4 582.3,528.7 583.1,531.5 584.5,474.3 586.0,538.4 586.0,538.4 587.6,536.7 589.3,536.7 590.8,535.3 592.3,474.3 593.8,530.5 595.0,531.3 596.6,534.2 598.2,532.9 598.6,533.3 600.0,474.3 601.5,533.8 603.1,535.5 605.0,529.3 606.3,528.4 607.8,474.3 609.2,525.7 610.5,524.9 612.1,528.2 613.7,534.9 614.1,535.6 615.5,474.3 617.0,540.8 617.2,541.1 619.0,548.5 620.9,550.5 621.8,552.8 623.3,474.3 624.8,567.0 625.1,569.0 627.0,566.6 628.8,566.8 629.6,566.9 631.0,474.3 632.5,565.2 633.7,566.7 634.9,572.6 636.1,563.5 637.3,555.2 638.8,474.3 640.2,565.3 641.0,566.1 642.2,569.1 643.5,572.5 644.7,576.7 645.1,576.4 646.5,474.3 648.0,572.2 648.4,571.4 650.2,577.4 652.0,579.1 652.8,580.8 654.3,474.3 655.8,588.4 657.5,592.7 659.4,596.3 660.6,592.4 662.0,474.3 663.5,586.8 664.9,588.7 666.7,594.6 668.3,598.4 669.8,474.3 671.2,603.3 672.2,604.3 674.0,606.4 675.9,605.8 676.1,605.6 677.5,474.3 679.0,605.5 679.5,606.0 681.4,608.9 682.6,612.8 683.8,611.6 683.8,611.5 685.3,474.3 686.8,606.6 687.5,605.8 688.7,603.4 689.9,599.5 691.6,597.5 693.0,474.3 694.5,596.0 694.8,595.8 696.2,474.3 697.7,594.2 699.1,594.1 699.3,594.2 700.8,474.3 702.2,592.2 702.8,591.0 704.6,587.2 706.4,586.6 707.1,584.5 708.5,474.3 710.0,582.9 710.1,583.0 711.9,583.0 713.8,580.4 714.8,577.9 716.3,474.3 717.8,571.4 719.3,567.5 721.1,561.2 722.6,557.4 724.0,474.3 725.5,556.1 726.6,554.3 728.4,553.9 730.3,556.8 730.3,556.9 731.8,474.3 733.2,560.6 733.9,561.1 735.2,564.4 736.4,564.2 738.1,561.2 739.5,474.3 741.0,552.4 741.9,550.5 743.7,546.8 745.6,546.1 745.8,546.0 747.3,474.3 748.8,544.3 749.2,543.8 751.1,543.0 752.9,548.0 753.6,548.2 755.0,474.3 756.5,551.9 756.6,552.0 758.4,554.7 760.2,550.0 761.3,548.0 762.8,474.3 764.2,542.3 765.7,538.4 767.6,535.5 769.1,535.4 770.5,474.3 772.0,536.9 773.1,537.7 774.9,540.8 776.7,543.7 776.8,543.7 778.3,474.3 779.8,546.8 780.4,548.0 782.2,545.1 784.1,540.1 784.6,536.3 786.0,474.3 787.5,524.1 788.3,525.5 790.2,525.3 792.0,525.5 792.3,525.7 793.8,474.3 795.2,525.2 795.7,524.7 797.5,523.8 799.3,525.9 800.1,527.1 801.5,474.3 803.0,527.2 803.0,527.2 804.8,527.1 806.1,527.1 807.3,529.5 807.8,528.7 809.2,474.3 810.7,518.5 811.6,516.6 813.4,515.7 815.2,514.0 815.5,513.5 816.9,474.3 818.4,508.7 819.5,508.6 820.7,491.6 822.0,477.1 823.2,476.3 823.2,476.2 824.6,474.3 826.1,464.9 826.8,461.6 828.0,463.4 829.2,466.4 830.5,449.7 830.9,443.4 832.4,474.3 833.8,418.7 834.1,416.4 835.4,425.6 836.6,437.3 837.8,449.0 838.6,455.9 840.1,474.3 841.5,461.8 842.7,480.9 843.9,486.5 845.1,490.0 846.3,492.1 847.8,474.3 849.2,496.1 850.3,497.7 851.9,499.1 853.4,499.3 854.0,500.0 855.5,474.3 856.9,500.7 857.8,497.7 859.3,499.9 860.8,497.5 861.7,497.6 863.2,474.3 864.6,496.1 865.2,495.9 866.7,493.9 868.1,491.2 869.4,490.3 870.9,474.3 872.4,483.3 873.3,481.2 875.1,474.2 876.9,468.2 877.2,468.2 878.6,474.3 880.1,464.5 880.6,465.1 881.8,466.2 883.0,467.1 884.3,468.9 884.9,466.3 886.3,474.3 887.8,457.0 887.9,456.7 889.1,456.0 890.4,453.9 891.6,446.9 892.6,445.6 894.0,474.3 895.5,445.4 896.5,446.9 897.7,436.7 898.9,429.0 900.1,423.5 900.3,422.6 901.7,474.3 903.2,411.4 903.8,409.4 905.0,405.5 906.3,404.8 907.5,416.3 908.0,422.1 909.5,474.3 910.9,432.4 911.1,433.0 912.4,429.1 913.6,427.1 914.8,423.4 915.7,419.3 917.2,474.3 918.6,425.9 919.7,430.6 920.9,431.7 922.2,430.8 923.4,429.3 923.4,429.0 924.9,474.3 926.3,422.0 927.0,424.4 928.3,427.8 929.5,430.3 930.7,431.3 931.1,430.8 932.6,474.3 934.0,427.2 934.4,427.3 935.6,429.3 936.8,428.2 938.0,424.8 938.8,420.7 940.3,474.3 941.7,400.8 942.9,398.5 944.2,396.9 945.4,393.1 946.5,389.5 948.0,474.3 949.5,395.4 950.3,400.4 951.5,394.8 952.7,392.5 953.9,387.6 954.3,387.3 955.7,474.3 957.2,394.1 957.6,395.4 958.8,391.7 960.0,390.7 961.3,387.4 962.0,384.7 963.4,474.3 964.9,376.1 964.9,376.0 966.2,375.5 967.4,373.6 968.6,375.3 969.7,375.4 971.1,474.3 972.6,356.6 973.5,349.4 974.7,341.7 975.9,336.5 977.2,332.2 977.4,332.5 978.8,474.3 980.3,338.6 980.8,339.4 982.1,342.0 983.3,346.1 984.5,349.6 985.1,347.8 986.5,474.3 988.0,337.9 988.2,337.4 989.4,335.4 991.3,332.2 992.8,342.7 994.3,474.3 995.7,351.4 996.7,352.1 997.9,353.7 999.2,361.4 1000.4,366.4 1000.5,366.7 1002.0,474.3 1003.4,370.4 1004.1,371.9 1005.3,371.3 1006.5,367.4 1007.7,367.1 1008.2,367.4 1009.7,474.3 1011.1,373.8 1011.4,375.0 1012.6,380.7 1013.8,376.2 1015.1,370.6 1015.9,365.7 1017.4,474.3 1018.8,351.7 1020.0,346.0 1021.2,342.9 1022.4,339.5 1023.6,348.9 1023.6,349.0 1025.1,474.3 1026.5,337.1 1027.3,330.0 1029.1,324.4 1031.0,320.0 1031.4,322.7 1032.8,474.3 1034.3,340.3 1034.6,341.9 1035.8,345.9 1037.1,352.0 1038.3,356.3 1039.1,358.8 1040.5,474.3 1042.0,358.2 1043.2,348.8 1044.4,347.2 1045.6,344.5 1046.8,349.3 1048.2,474.3 1049.7,340.3 1050.5,334.7 1051.7,334.9 1053.0,332.1 1054.2,337.7 1054.5,338.6 1055.9,474.3 1057.4,324.2 1057.8,320.6 1059.1,317.0 1060.3,316.0 1061.5,317.8 1062.2,320.2 1063.7,474.3 1065.1,317.7 1065.2,317.6 1066.4,326.2 1067.6,335.4 1068.9,329.7 1069.9,325.2 1071.4,474.3 1072.8,316.7 1073.7,314.7 1075.0,310.4 1076.6,303.8 1077.6,299.1 1079.1,474.3 1080.5,288.6 1081.2,290.4 1082.4,292.3 1083.7,303.0 1084.9,317.5 1085.3,314.3 1086.8,474.3 1088.2,299.3 1088.6,299.4 1089.8,298.5 1091.0,306.1 1092.2,312.5 1093.0,310.6 1094.5,474.3 1095.9,320.9 1097.0,323.2 1098.4,474.3 1099.9,320.2 1100.8,323.0 1102.2,474.3 1103.7,332.2 1104.4,336.0 1105.7,335.2 1106.9,334.2 1108.1,339.8 1108.5,340.2 1109.9,474.3 1111.4,334.1 1111.8,332.6 1113.0,332.5 1114.2,328.8 1115.5,322.7 1116.2,318.9 1117.6,474.3 1119.1,309.0 1120.3,303.6 1121.6,309.5 1122.8,314.3 1123.9,321.1 1125.3,474.3 1126.8,321.1 1127.7,316.7 1128.9,320.1 1130.1,320.8 1131.3,324.9 1131.6,325.7 1133.0,474.3 1134.5,319.5 1135.0,316.3 1136.2,307.8 1137.5,297.3 1138.7,297.9 1139.9,301.3 1141.1,307.8 1142.3,316.7 1143.6,308.3 1144.8,299.9 1146.0,302.9 1147.0,303.9 1148.5,474.3 1149.9,285.9 1150.7,287.6 1152.1,290.0 1153.3,296.4 1154.6,301.4 1154.7,302.7 1156.2,474.3 1157.6,303.6 1158.7,294.1 1160.7,293.3 1161.9,305.2 1162.4,310.1 1163.9,474.3 1165.3,325.0 1165.6,326.0 1166.8,332.8 1168.0,338.3 1169.5,340.8 1170.1,343.1 1171.6,474.3 1173.0,344.4 1174.1,345.6 1175.4,347.9 1176.6,351.2 1177.8,351.8 1177.8,351.9 1179.3,474.3 1180.8,357.3 1181.5,356.0 1182.7,354.8 1183.9,347.4 1185.1,341.6 1185.6,343.3 1187.0,474.3 1188.5,344.5 1188.8,342.4 1190.0,335.6 1191.2,339.2 1192.5,341.2 1193.3,338.4 1194.7,474.3 1196.2,331.7 1197.4,333.8 1198.6,328.4 1199.8,323.9 1201.0,326.1 1202.4,474.3 1203.9,321.6 1204.7,316.4 1205.9,319.9 1207.1,321.4 1208.4,323.5 1208.7,324.0 1210.1,474.3 1211.6,326.1 1212.0,326.2 1213.3,326.3 1214.5,322.7 1215.7,320.5 1216.9,317.5 1218.1,311.2 1219.4,305.0 1220.6,302.3 1221.8,297.7 1223.0,298.4 1224.3,295.2 1225.5,303.5 1226.7,306.9 1227.9,306.2 1229.1,309.0 1230.4,311.5 1231.6,316.7 1232.8,319.9 1234.0,326.0 1235.3,331.7 1236.5,336.3 1237.7,330.5 1238.9,326.3 1240.1,321.5 1241.4,316.7 1242.6,314.2 1243.8,311.7 1245.0,314.0 1246.3,313.4 1247.5,308.8 1248.7,304.5 1249.9,300.3 1251.1,296.8 1252.4,297.9 1253.6,299.7 1254.8,299.7 1256.0,297.0 1257.3,295.6 1258.5,294.8 1259.7,297.5 1260.9,299.8 1262.2,305.4 1263.4,309.2 1264.6,313.6 1265.8,319.4 1267.0,325.3 1268.3,331.1 1269.5,329.6 1270.7,331.7 1271.9,329.5 1273.2,326.4 1274.4,322.0 1275.6,316.8 1276.8,317.4 1278.0,318.5 1279.3,315.5 1280.5,314.2 1282.4,311.2 1282.7,474.3 1283.2,474.3 1283.4,309.7 1285.4,301.3 1286.6,302.5 1287.8,306.8 1289.0,301.3 1290.3,300.4 1291.5,297.2 1292.7,297.1 1293.9,295.0 1295.2,293.0 1296.4,292.1 1297.6,293.7 1298.8,299.3 1300.0,302.5 1301.3,298.3 1302.5,289.0 1303.7,296.5 1304.9,302.0 1307.1,309.8 1307.4,474.3 1308.1,474.3 1308.4,304.2 1309.8,295.0 1311.1,303.0 1312.3,309.6 1313.5,310.3 1314.7,308.0 1315.9,314.1 1317.2,316.3 1318.4,317.3 1319.6,312.9 1320.8,319.1 1322.1,323.6 1323.3,320.3 1324.5,317.2 1325.7,313.8 1326.9,309.4 1328.2,313.0 1329.4,312.3 1330.6,311.5 1331.8,312.5 1333.1,315.8 1334.3,318.1 1335.5,321.9 1336.7,323.4 1337.9,329.3 1339.2,331.9 1340.4,332.0 1341.6,334.4 1342.8,336.5 1344.1,341.6 1345.3,345.4 1346.5,348.4 1347.7,351.8 1348.9,358.1 1350.2,360.6 1351.4,367.7 1352.6,369.7 1353.8,376.0 1355.1,378.0 1356.3,381.5 1357.5,387.0 1358.7,390.2 1360.0,391.9 1361.2,396.0 1362.4,394.5 1363.6,392.5 1364.8,396.6 1366.1,400.8 1367.3,407.7 1368.5,412.5 1369.7,408.9 1371.0,406.4 1372.2,405.9 1373.4,403.9 1374.6,402.3 1375.8,400.2 1377.6,395.7 1377.8,474.3 1378.5,474.3 1378.8,390.2 1380.7,382.8 1382.0,386.0 1383.2,388.3 1384.4,388.5 1385.6,389.4 1386.8,385.5 1388.1,382.1 1389.3,379.3 1390.5,377.7 1391.7,375.7 1393.0,373.0 1394.2,374.2 1395.4,375.2 1396.6,377.0 1397.8,378.2 1399.1,377.4 1400.3,376.1 1401.5,376.3 1402.7,377.7 1404.0,377.2 1405.2,373.0 1406.4,372.1 1407.6,370.3 1408.9,366.6 1410.1,360.5 1411.3,360.8 1412.5,363.1 1413.7,360.2 1415.0,358.7 1416.2,354.2 1417.4,351.0 1418.6,355.6 1419.9,360.9 1421.1,362.4 1422.3,366.1 1423.5,360.3 1424.7,358.0 1426.0,358.7 1427.2,361.0 1428.4,363.2 1429.6,365.8 1430.9,367.7 1432.1,370.1 1433.3,370.5 1434.5,372.7 1435.7,369.9 1437.0,368.2 1438.4,370.9 1439.9,373.4 1442.1,383.2 1443.5,386.5 1444.8,390.9 1446.2,392.8 1447.6,394.3 1448.9,403.1 1450.3,407.8 1450.8,408.6 1451.1,474.3 1451.6,474.3 1451.9,403.2 1453.0,401.8 1454.3,405.0 1455.7,405.6 1457.6,397.5 1458.4,399.6 1458.7,474.3 1459.2,474.3 1459.5,402.8 1461.1,402.0 1462.5,404.9 1463.9,407.7 1465.2,415.1 1466.6,418.5 1467.9,421.7 1469.3,422.7 1470.7,423.2 1472.0,425.5 1473.4,427.5 1474.7,427.7 1476.1,428.1 1477.4,426.4 1478.8,427.1 1480.2,429.6 1481.5,429.9 1482.9,430.3 1484.2,430.4 1485.6,433.5 1487.0,435.2 1488.3,436.0 1489.7,438.5 1491.0,439.6 1492.4,443.5 1493.8,446.0 1495.1,447.4 1496.5,448.2 1497.8,444.5 1499.2,440.4 1500.5,434.7 1501.9,426.9 1503.3,416.0 1503.8,415.5 1504.1,474.3 1504.6,474.3 1504.9,413.6 1505.4,413.7 1507.3,415.6 1508.7,417.9 1510.1,418.7 1511.4,413.1 1512.8,407.1 1514.1,404.9 1515.5,397.3 1516.8,400.6 1518.2,402.1 1519.6,402.2 1520.9,399.4"/>
<polyline fill="none" stroke="#f3c038" stroke-width="2" stroke-opacity="0.86" stroke-linejoin="miter" stroke-miterlimit="10" points="85.6,449.3 86.6,447.4 87.8,443.9 89.8,460.2 91.0,444.5 92.2,433.3 93.4,435.8 94.7,438.2 95.9,440.6 97.1,442.8 98.3,440.7 99.6,445.3 100.8,446.8 102.0,446.2 103.2,446.9 104.4,443.9 105.7,447.9 106.9,448.7 108.1,452.2 109.3,450.6 110.8,452.1 112.3,453.9 114.2,433.5 115.5,429.3 116.7,426.3 117.9,415.4 119.1,403.9 120.3,398.9 121.6,392.5 122.8,411.8 124.5,395.5 125.2,372.5 125.2,340.6 126.5,328.3 127.7,318.3 128.9,302.3 130.1,291.1 131.3,281.0 132.6,271.2 134.3,258.9 136.2,268.8 138.2,240.5 139.9,277.7 141.1,291.6 142.3,305.4 144.1,290.8 146.0,307.6 147.2,297.0 148.5,286.5 149.7,307.9 150.9,329.9 152.1,329.2 153.3,325.7 155.2,329.9 157.0,333.2 158.2,329.8 159.5,327.6 161.3,324.0 163.1,317.6 164.4,325.1 165.6,332.8 167.4,336.7 169.2,339.8 170.5,344.7 171.7,347.2 172.9,344.4 174.1,340.4 175.4,345.5 176.6,350.1 177.8,349.6 179.0,351.5 180.2,353.9 181.5,357.3 182.7,356.2 183.9,351.5 185.6,342.5 187.6,354.2 188.8,363.6 190.0,374.0 191.1,362.7 192.5,474.3 193.9,372.3 194.4,377.2 195.6,368.2 196.9,362.4 198.3,361.1 199.8,358.3 201.0,364.3 202.2,369.0 203.5,374.2 204.7,381.3 205.9,380.8 207.1,382.9 208.4,371.2 209.6,362.7 210.8,356.0 212.0,349.9 213.3,349.3 214.5,346.9 215.7,358.0 216.9,367.0 218.1,360.3 219.4,357.3 220.6,354.0 221.8,349.9 223.6,349.0 225.5,344.6 226.7,347.8 227.9,350.1 229.1,353.0 230.4,358.9 231.6,353.6 232.8,351.5 234.0,358.8 235.3,363.8 236.5,359.3 237.7,353.8 238.9,358.3 240.1,361.4 241.4,359.9 242.6,356.3 243.8,364.9 245.0,371.6 246.3,369.3 247.5,366.8 248.7,359.6 249.9,351.5 251.1,348.1 252.4,349.7 253.6,347.4 254.8,347.0 256.0,345.3 257.3,341.4 258.5,347.6 259.7,354.3 260.9,351.0 262.2,349.9 263.4,350.8 264.6,351.7 265.8,352.9 267.0,356.2 268.9,355.7 270.7,357.3 271.9,356.3 273.2,353.6 274.4,355.8 275.6,359.5 276.8,358.6 278.0,357.4 279.3,361.6 280.5,364.9 281.7,362.7 282.9,361.8 284.2,360.3 285.4,356.8 287.3,367.3 288.6,351.6 289.8,340.2 291.0,345.8 292.2,351.2 293.7,350.8 295.2,347.4 296.4,352.2 297.6,356.5 298.8,359.0 300.0,362.7 301.3,356.1 302.5,350.4 303.7,349.4 304.9,347.9 306.4,346.5 307.9,344.6 309.8,354.1 311.1,358.5 312.3,364.9 313.5,366.4 314.7,372.7 315.9,367.4 317.2,363.8 318.4,368.9 319.6,372.0 320.8,368.1 322.1,367.2 323.3,370.9 324.5,378.6 325.7,372.9 326.9,364.2 328.2,359.3 329.4,357.3 330.6,354.4 331.8,349.7 333.1,345.3 334.3,344.6 335.5,339.2 336.7,333.0 337.9,333.4 339.2,330.0 341.1,322.6 342.3,331.3 343.6,340.5 345.0,341.3 346.5,345.5 347.7,347.9 348.9,357.4 350.2,358.7 351.4,362.1 352.6,357.8 353.8,351.5 355.1,352.7 356.3,353.5 357.5,352.8 358.7,350.5 360.0,350.4 361.2,351.2 362.4,357.4 363.6,356.9 364.8,362.9 366.1,368.5 367.3,372.7 368.5,373.9 369.7,374.5 371.0,372.1 372.8,365.6 374.6,359.8 375.8,363.1 377.1,369.1 378.3,366.2 379.5,363.7 380.7,368.1 382.0,371.6 383.8,370.8 385.6,365.1 386.8,369.7 388.1,373.7 389.3,368.7 390.5,364.6 391.7,363.6 393.0,361.9 394.2,362.0 395.4,363.4 396.6,360.5 397.8,356.1 399.1,364.1 400.3,371.0 401.5,377.7 402.7,386.4 404.6,385.2 406.4,384.0 407.6,386.6 408.9,391.2 410.7,391.5 412.5,393.9 414.4,400.0 416.2,405.6 416.9,424.6 418.1,415.8 419.4,409.1 420.6,401.0 421.8,394.8 423.5,390.8 424.7,397.9 426.0,403.4 427.7,416.0 429.3,412.2 430.9,410.8 432.1,413.6 433.3,416.8 434.5,422.3 435.7,423.6 437.0,423.1 438.2,425.0 439.9,423.0 442.1,432.3 444.0,414.6 445.2,410.2 446.5,407.0 447.7,415.6 448.9,422.9 450.1,421.6 451.3,417.9 452.6,422.1 453.8,427.4 455.0,432.3 456.2,431.8 457.5,435.3 458.7,437.6 459.9,440.1 461.1,441.0 462.3,437.5 463.6,433.1 464.8,427.6 466.0,422.7 467.2,419.0 468.5,415.1 469.7,414.7 470.9,414.2 472.1,413.4 473.3,412.6 474.6,414.0 475.8,412.9 477.0,417.5 478.2,420.6 480.1,419.5 481.9,416.8 483.1,422.6 484.4,427.6 485.6,428.2 486.8,430.7 488.0,430.5 489.2,428.1 490.8,428.9 492.4,429.2 494.1,421.5 495.4,426.4 496.6,435.5 497.8,439.6 499.0,443.4 500.9,438.4 502.7,435.8 503.9,436.8 505.1,443.4 506.4,442.6 507.6,442.4 508.8,444.7 510.0,449.8 511.2,452.9 512.5,457.2 513.7,452.0 514.9,447.0 516.9,441.8 518.3,445.9 519.8,452.0 521.0,455.3 522.2,456.9 523.5,459.1 524.7,462.2 525.9,456.7 527.1,451.6 528.4,450.9 529.6,449.7 530.8,451.7 532.0,449.3 533.3,452.1 534.5,451.9 535.7,451.2 536.9,450.9 538.4,451.9 539.9,452.7 541.8,467.8 543.0,471.1 544.3,477.4 545.5,482.7 546.7,486.9 547.9,488.7 549.1,493.0 550.4,490.6 551.6,489.1 552.8,487.4 554.0,486.8 555.3,485.9 556.5,483.4 557.7,486.9 558.9,491.9 560.1,492.4 561.4,489.7 562.6,493.0 563.8,491.9 565.8,481.9 567.5,468.4 568.7,475.3 569.9,479.3 571.1,480.4 572.4,482.4 573.6,478.4 574.8,477.1 576.0,474.0 577.3,471.5 578.5,471.2 579.7,469.0 580.9,470.7 582.2,472.8 583.4,475.5 584.6,475.0 585.8,470.4 587.0,466.1 588.3,464.8 589.5,462.1 590.7,463.0 591.9,463.5 593.2,459.8 594.4,457.6 595.6,457.4 596.8,456.0 598.0,459.7 599.3,464.2 600.5,464.0 601.7,461.5 602.9,464.3 604.2,466.5 605.4,460.5 606.6,457.4 607.8,454.7 609.0,452.3 610.3,454.4 611.5,453.9 612.7,452.2 613.9,449.9 615.2,455.6 616.4,459.0 617.6,459.1 618.8,457.2 620.0,459.9 621.3,460.2 622.5,465.1 623.7,470.4 624.9,470.6 626.2,471.6 627.4,473.9 628.6,476.2 629.8,477.9 631.1,478.2 632.3,480.3 633.5,481.8 634.7,479.0 635.9,474.1 637.2,473.3 638.4,469.0 639.6,468.6 640.8,467.2 642.1,469.1 643.3,471.4 644.5,474.6 645.7,474.5 646.9,474.3 648.2,477.0 649.4,479.7 650.6,481.5 651.8,484.1 652.8,485.9 654.3,474.3 655.8,482.7 656.7,485.8 657.9,489.6 659.2,492.9 660.4,493.7 660.6,493.4 662.0,474.3 663.5,492.2 664.1,492.9 665.3,492.8 666.5,495.0 667.7,498.9 668.3,498.1 669.8,474.3 671.2,497.0 671.4,497.0 672.6,498.0 673.8,500.0 675.1,501.5 675.3,498.1 676.1,500.1 677.5,474.3 679.0,503.8 679.5,503.8 681.4,504.5 683.2,505.7 683.8,504.7 685.3,474.3 686.8,503.7 686.9,503.8 688.7,502.6 690.5,502.6 691.6,499.9 693.0,474.3 694.5,502.0 694.8,502.7 696.7,505.6 698.5,505.6 699.3,505.2 700.8,474.3 702.2,504.8 704.0,504.0 705.8,507.5 707.1,508.2 708.5,474.3 710.0,509.0 711.3,510.9 713.2,512.5 714.8,509.6 716.3,474.3 717.8,507.8 718.0,508.2 719.3,507.0 720.5,505.0 721.7,502.1 722.6,501.7 724.0,474.3 725.5,496.5 726.6,493.9 727.8,495.1 729.0,497.1 730.3,498.6 730.3,498.8 731.8,474.3 733.2,505.4 733.9,506.7 735.2,507.7 736.4,510.1 737.6,508.0 738.1,506.6 739.5,474.3 741.0,503.6 742.5,502.3 743.7,507.8 744.9,514.0 745.8,516.6 747.3,474.3 748.8,518.7 749.8,518.0 751.1,516.9 752.3,517.0 753.6,519.7 755.0,474.3 756.5,524.8 757.8,526.5 759.6,529.5 760.8,526.6 761.3,526.3 762.8,474.3 764.2,522.0 764.5,521.3 765.7,516.2 766.9,516.2 768.2,515.0 769.1,512.2 770.5,474.3 772.0,510.8 773.1,512.0 774.3,511.5 775.5,509.9 776.7,507.0 776.8,506.8 778.3,474.3 779.8,505.3 780.4,504.1 781.6,505.1 782.8,502.4 784.1,499.6 784.6,497.8 786.0,474.3 787.5,489.7 787.7,489.2 788.9,484.3 790.2,483.8 791.4,478.2 792.3,476.6 793.8,474.3 795.2,479.8 796.3,482.3 797.5,483.8 798.7,486.2 800.0,488.8 800.1,488.3 801.5,474.3 803.0,482.3 803.6,484.4 804.8,485.4 806.1,481.1 807.3,476.4 807.8,477.3 809.2,474.3 810.7,480.7 811.0,480.9 812.2,482.1 813.4,478.5 814.6,479.2 815.5,477.5 816.9,474.3 818.4,474.2 819.5,468.8 820.7,466.8 822.0,464.2 823.2,469.1 823.2,469.1 824.6,474.3 826.1,475.8 826.8,479.4 828.1,477.5 829.3,476.5 830.5,480.3 830.9,480.5 832.4,474.3 833.8,482.5 834.2,482.9 835.4,486.3 836.6,488.7 837.8,488.8 838.6,488.0 840.1,474.3 841.5,491.0 841.5,491.0 842.7,489.7 844.0,494.5 845.2,495.9 846.3,498.5 847.8,474.3 849.2,504.4 850.7,504.1 852.5,505.8 854.0,507.6 855.5,474.3 856.9,507.2 858.0,506.3 859.9,505.8 861.7,504.7 861.7,504.6 863.2,474.3 864.6,503.7 864.7,503.6 866.0,499.0 867.2,493.9 868.4,488.7 869.4,484.3 870.9,474.3 872.4,477.1 873.3,473.8 874.5,476.5 875.7,476.1 877.0,476.7 877.2,476.5 878.6,474.3 880.1,474.6 881.8,481.4 883.6,484.1 884.9,485.7 886.3,474.3 887.8,487.1 889.1,489.2 891.0,488.7 892.6,486.4 894.0,474.3 895.5,482.6 896.5,480.8 897.7,474.9 898.9,468.3 900.1,465.4 900.3,464.9 901.7,474.3 903.2,458.9 903.8,457.2 905.0,456.3 906.3,454.1 907.5,451.6 908.0,450.6 909.5,474.3 910.9,453.1 911.1,453.3 912.4,456.3 913.6,455.9 914.8,452.5 915.7,450.2 917.2,474.3 918.6,452.8 919.7,454.2 920.9,457.5 922.2,454.3 923.4,449.1 923.4,449.2 924.9,474.3 926.3,450.5 927.0,447.8 928.3,444.5 929.5,447.6 930.7,451.8 931.1,452.5 932.6,474.3 934.0,456.6 934.4,456.5 935.6,454.9 936.8,450.7 938.0,447.0 938.8,444.4 940.3,474.3 941.7,431.1 942.9,427.9 944.2,422.7 945.4,420.5 946.5,418.5 948.0,474.3 949.5,426.8 950.3,428.7 951.5,435.1 952.7,439.9 953.9,441.6 954.3,442.8 955.7,474.3 957.2,442.5 957.6,440.2 958.8,437.5 960.0,434.2 961.3,429.7 962.0,428.9 963.4,474.3 964.9,436.6 964.9,436.8 966.2,441.8 967.4,446.6 968.6,451.0 969.7,452.3 971.1,474.3 972.6,452.4 973.5,449.2 974.7,446.2 975.9,444.7 977.2,449.3 977.4,449.8 978.8,474.3 980.3,449.4 980.8,449.4 982.1,448.3 983.3,447.6 984.5,449.4 985.1,449.5 986.5,474.3 988.0,447.1 988.2,446.7 989.4,449.8 990.6,449.2 991.8,453.4 992.8,456.4 994.3,474.3 995.7,461.4 996.7,462.2 997.9,466.6 999.2,465.2 1000.4,463.9 1000.5,464.1 1002.0,474.3 1003.4,466.5 1004.1,467.7 1005.3,469.0 1006.5,469.9 1007.7,471.8 1008.2,472.9 1009.7,474.3 1011.1,473.9 1011.4,474.0 1012.6,476.0 1014.4,477.6 1015.9,478.7 1017.4,474.3 1018.8,476.6 1020.0,476.7 1021.2,472.7 1022.4,471.8 1023.6,468.2 1023.6,468.1 1025.1,474.3 1026.5,460.2 1027.3,456.6 1028.5,454.1 1029.7,452.0 1031.0,451.5 1031.4,450.6 1032.8,474.3 1034.3,453.4 1034.6,453.9 1035.8,456.1 1037.1,457.4 1038.3,456.8 1039.1,456.7 1040.5,474.3 1042.0,450.4 1043.2,451.4 1044.4,449.6 1045.6,445.9 1046.8,442.1 1048.2,474.3 1049.7,440.3 1050.5,442.1 1051.7,442.0 1053.0,445.9 1054.2,445.7 1054.5,444.9 1055.9,474.3 1057.4,438.1 1057.8,437.1 1059.1,433.9 1060.3,432.8 1061.5,432.8 1062.2,431.1 1063.7,474.3 1065.1,432.1 1065.2,432.3 1066.4,436.9 1067.6,440.3 1068.9,442.3 1069.9,439.2 1071.4,474.3 1072.8,433.0 1073.7,429.5 1075.0,429.1 1076.2,424.9 1077.4,422.4 1077.6,422.3 1079.1,474.3 1080.5,427.5 1081.1,429.3 1082.3,433.1 1083.5,437.6 1084.7,442.4 1085.3,444.3 1086.8,474.3 1088.2,451.5 1088.4,451.3 1089.6,454.4 1090.9,456.7 1092.1,458.7 1093.0,458.9 1094.5,474.3 1095.9,454.7 1097.0,451.9 1098.2,448.8 1099.9,447.1 1100.8,448.6 1102.2,474.3 1103.7,457.5 1104.4,461.0 1105.9,462.3 1107.4,462.6 1108.5,464.2 1109.9,474.3 1111.4,465.0 1111.8,465.2 1113.3,465.8 1114.7,463.5 1116.2,464.2 1117.6,474.3 1119.1,461.2 1119.1,461.2 1120.7,460.4 1122.4,456.5 1123.9,456.9 1125.3,474.3 1126.8,457.8 1127.3,458.3 1128.9,455.1 1130.5,453.7 1131.6,451.7 1133.0,474.3 1134.5,445.5 1135.4,443.7 1137.0,439.2 1138.7,436.5 1139.9,434.3 1141.1,431.8 1142.3,425.0 1143.6,416.8 1144.8,413.7 1146.0,411.8 1147.0,410.3 1148.5,474.3 1149.9,403.1 1150.9,402.1 1152.1,405.3 1153.3,409.5 1154.6,412.9 1154.7,413.9 1156.2,474.3 1157.6,418.2 1158.2,417.3 1159.5,408.7 1160.7,404.5 1161.9,407.6 1162.4,408.6 1163.9,474.3 1165.3,416.8 1165.6,417.4 1166.8,413.4 1168.0,412.3 1169.2,413.5 1170.1,414.8 1171.6,474.3 1173.0,413.2 1174.1,415.4 1175.4,419.2 1176.6,420.9 1177.8,424.7 1179.0,421.0 1180.2,417.6 1181.5,416.1 1182.7,414.2 1183.9,414.4 1185.1,411.7 1186.4,412.2 1187.6,413.2 1188.8,410.2 1190.0,407.7 1191.2,407.7 1192.5,409.8 1193.7,410.2 1194.9,410.2 1196.1,409.0 1197.4,409.5 1198.6,408.8 1199.8,407.3 1201.0,410.7 1202.2,413.3 1203.5,412.2 1204.7,412.2 1205.9,410.4 1207.1,410.2 1208.4,408.6 1209.6,406.5 1210.8,405.4 1212.0,404.3 1213.3,405.3 1214.5,407.1 1215.7,409.3 1216.9,413.0 1218.1,405.9 1219.4,402.3 1220.6,400.1 1221.8,400.0 1223.0,394.4 1224.3,394.5 1225.5,396.4 1226.7,396.2 1227.9,393.3 1229.1,390.1 1230.4,395.0 1231.6,399.1 1232.8,397.6 1234.0,395.0 1235.3,387.8 1236.5,383.0 1237.7,377.7 1238.9,372.9 1240.1,373.7 1241.4,375.6 1242.6,376.7 1243.8,378.3 1245.0,375.8 1246.3,372.6 1247.5,373.3 1248.7,374.6 1249.9,371.9 1251.1,370.6 1252.4,369.2 1253.6,366.7 1254.8,381.6 1256.0,384.1 1257.3,385.2 1258.5,384.1 1259.7,382.3 1260.9,385.2 1262.2,385.1 1263.4,382.0 1264.6,379.9 1265.8,384.3 1267.0,387.1 1268.3,389.0 1269.5,393.4 1270.7,396.3 1271.9,397.9 1273.2,395.1 1274.4,390.3 1275.6,382.1 1276.8,378.4 1278.0,384.0 1279.3,387.8 1280.5,384.3 1281.7,385.7 1282.9,385.4 1284.2,382.5 1285.4,381.6 1286.6,380.6 1287.8,381.4 1289.0,383.2 1290.3,382.2 1291.5,381.8 1292.7,380.3 1293.9,378.3 1295.2,379.8 1296.4,384.2 1297.6,385.4 1298.8,388.2 1300.0,386.3 1301.3,383.5 1302.5,386.9 1303.7,389.7 1304.9,393.7 1306.2,396.4 1307.4,395.9 1308.6,395.4 1309.8,396.3 1311.1,402.3 1312.3,400.7 1313.5,398.0 1314.7,393.9 1315.9,392.2 1317.2,391.7 1318.4,394.4 1319.6,394.3 1320.8,393.5 1322.1,388.8 1323.3,388.2 1324.5,385.6 1325.7,382.4 1326.9,386.3 1328.2,383.9 1329.4,382.6 1330.6,380.4 1331.8,383.7 1333.1,383.6 1334.3,383.9 1335.5,380.3 1336.7,382.5 1337.9,383.4 1339.2,382.6 1340.4,381.6 1341.6,381.9 1342.8,382.5 1344.1,378.9 1345.3,378.7 1346.5,376.1 1347.7,374.3 1348.9,380.5 1350.2,385.1 1351.4,386.5 1352.6,388.5 1353.8,391.1 1355.1,394.8 1356.3,395.3 1357.5,397.3 1358.7,400.6 1360.0,404.8 1361.2,406.8 1362.4,402.4 1363.6,403.8 1364.8,408.1 1366.1,414.2 1367.3,419.8 1368.5,427.0 1369.7,422.7 1371.0,417.2 1372.2,414.8 1373.4,410.1 1374.6,407.4 1375.8,402.0 1377.1,398.6 1378.3,394.6 1379.5,391.0 1380.7,385.5 1382.0,387.1 1383.2,390.3 1384.4,391.6 1385.6,388.2 1386.8,388.2 1388.1,391.2 1389.3,392.5 1390.5,392.5 1391.7,395.3 1393.0,397.9 1394.2,401.4 1395.4,404.2 1396.6,409.1 1397.8,412.0 1399.1,413.4 1400.3,414.2 1401.5,409.3 1402.7,406.5 1404.0,408.0 1405.2,409.1 1406.4,403.0 1407.6,402.8 1408.9,399.8 1410.1,399.5 1411.3,395.5 1412.5,388.9 1413.7,390.2 1415.0,387.2 1416.2,384.6 1417.4,380.0 1418.6,379.3 1419.9,377.9 1421.1,375.4 1422.3,372.0 1423.5,368.9 1424.7,368.0 1426.0,370.8 1427.2,370.2 1428.4,372.3 1429.6,373.0 1430.9,374.0 1432.1,374.6 1433.3,370.7 1434.5,370.6 1435.7,367.8 1437.0,365.4 1438.4,358.5 1439.9,353.0 1442.1,358.3 1443.5,354.9 1444.8,354.6 1446.2,351.1 1447.6,345.2 1448.9,352.8 1450.3,358.3 1452.2,372.4 1454.3,360.6 1455.7,355.6 1457.1,350.0 1458.4,349.9 1459.8,350.2 1461.1,355.8 1462.5,361.0 1464.7,366.3 1466.0,362.6 1467.4,358.6 1468.8,355.9 1470.1,354.3 1471.5,355.1 1472.8,357.6 1474.2,356.9 1475.5,353.3 1476.9,357.1 1478.3,355.3 1479.6,355.7 1481.0,354.2 1482.3,356.6 1483.7,358.9 1485.1,360.8 1486.4,362.1 1487.8,362.3 1489.1,363.6 1490.5,366.1 1491.8,368.5 1493.2,371.6 1494.6,376.9 1495.9,376.2 1497.3,371.7 1498.6,378.9 1500.0,385.1 1501.4,375.8 1502.7,371.1 1504.1,368.8 1505.4,366.3 1506.8,371.8 1508.2,373.9 1510.1,377.6 1511.4,376.3 1512.8,374.1 1514.1,372.5 1515.5,370.0 1516.8,370.8 1518.2,370.5 1519.6,371.3 1520.9,372.5"/>
<polyline fill="none" stroke="#f3a8f3" stroke-width="2" stroke-opacity="0.86" stroke-linejoin="miter" stroke-miterlimit="10" points="85.6,410.5 87.0,414.3 88.6,414.5 90.3,423.9 91.5,408.7 92.7,395.5 93.9,400.4 95.2,404.9 96.4,405.5 97.6,405.9 98.8,408.7 100.0,412.5 101.3,410.1 102.5,409.1 104.1,411.5 105.7,411.8 106.9,415.1 108.1,418.8 109.3,421.3 110.6,424.3 111.8,431.7 113.0,438.1 114.2,424.2 116.2,404.5 117.9,370.5 119.1,388.6 120.3,404.3 121.6,417.5 122.8,431.7 124.5,405.1 125.5,379.7 127.7,323.0 128.9,313.3 130.1,306.8 131.3,295.4 132.6,286.7 134.3,300.5 135.5,296.8 136.7,292.1 138.7,275.1 140.6,322.6 141.9,328.2 143.1,332.5 144.3,327.0 145.5,323.9 146.7,325.3 148.0,326.9 149.4,322.5 150.9,314.6 152.1,324.1 153.3,329.8 154.8,326.6 156.3,323.4 157.5,330.3 158.7,336.8 160.3,342.9 161.9,352.7 163.1,342.0 164.4,329.7 165.6,337.2 166.8,342.6 168.0,348.0 169.2,351.0 170.5,354.3 171.7,357.5 172.9,360.3 174.1,362.4 175.4,364.1 176.6,371.8 177.8,377.1 179.0,382.8 180.2,387.8 181.5,396.0 182.7,388.9 183.9,381.9 185.1,388.3 186.4,396.7 187.6,399.6 188.8,404.8 190.0,399.8 191.2,396.2 192.2,395.8 192.5,474.3 193.2,474.3 193.7,385.6 194.9,384.5 196.1,380.6 197.4,376.3 199.2,374.4 201.0,372.2 202.2,371.8 203.5,374.1 204.7,376.0 205.9,376.9 207.1,372.6 208.4,368.2 210.2,369.4 212.0,367.0 213.3,374.2 214.5,381.3 215.7,384.2 216.9,386.2 218.1,387.7 219.4,390.9 220.6,383.3 221.8,376.3 223.0,375.3 224.3,376.9 226.2,368.6 227.7,377.3 229.1,383.4 230.4,389.2 231.6,394.4 233.4,396.4 235.3,398.2 236.5,397.4 237.7,396.2 238.9,388.1 240.1,383.6 241.4,390.2 242.6,395.9 243.8,400.5 245.0,405.1 246.9,398.8 248.7,391.7 249.9,384.6 251.1,376.4 252.4,379.0 253.6,381.3 254.8,377.5 256.0,374.1 257.3,377.1 258.5,383.8 259.7,379.0 260.9,373.7 262.2,371.7 263.4,369.5 264.6,366.6 265.8,365.4 267.0,363.9 268.3,369.2 269.5,370.9 270.7,377.1 271.9,386.8 273.2,390.0 274.4,389.0 275.6,386.6 276.8,383.6 278.0,381.8 279.3,382.7 280.5,389.2 281.7,386.8 282.9,383.9 284.8,389.4 286.6,396.5 287.8,379.7 289.0,364.5 290.3,366.2 291.5,368.1 292.7,368.0 293.9,366.9 295.2,371.3 296.4,373.7 297.6,372.9 298.8,372.0 300.0,376.7 301.3,382.1 302.5,380.0 303.7,373.7 304.9,369.6 306.2,369.7 307.4,372.2 308.6,372.2 309.8,379.9 311.1,386.1 312.9,391.7 314.7,399.0 315.9,395.1 317.2,392.8 318.4,388.9 319.6,387.6 320.8,393.4 322.1,395.8 323.3,399.6 324.5,404.8 325.7,394.7 326.9,387.0 328.2,381.4 329.4,376.0 330.6,373.1 331.8,366.5 333.1,362.2 334.3,357.0 335.5,354.2 336.7,352.3 337.9,348.9 339.2,346.3 341.1,336.4 342.8,346.6 344.1,351.3 345.3,357.0 346.5,364.4 347.7,372.0 348.9,369.4 350.2,366.4 351.4,363.6 352.6,360.9 353.8,359.3 355.1,357.3 356.9,358.2 358.7,358.2 360.0,356.2 361.2,355.1 362.4,356.4 363.6,358.6 364.8,368.1 366.1,376.7 367.3,375.6 368.5,371.4 369.7,373.7 371.0,376.2 372.2,379.4 373.4,384.7 374.6,381.0 375.8,374.2 377.7,376.0 379.5,377.2 380.7,384.8 382.0,391.9 383.2,387.4 384.4,386.0 385.6,391.8 386.8,396.9 388.1,391.4 389.3,385.9 390.5,383.5 391.7,381.1 393.6,380.5 395.4,382.2 396.6,379.6 397.8,379.0 399.1,390.0 400.3,396.7 401.5,400.8 402.7,404.4 404.7,424.2 406.4,410.2 407.6,413.7 408.9,417.3 410.1,419.2 411.3,421.8 412.5,426.2 413.7,431.6 415.0,438.9 416.2,442.9 417.4,447.2 418.6,451.0 419.9,445.4 421.1,441.0 422.3,435.9 423.5,429.9 424.7,436.9 426.0,443.7 427.2,446.8 428.4,454.3 429.6,452.2 430.9,450.9 432.1,446.6 433.3,444.8 434.5,449.1 435.7,455.8 437.0,458.8 438.2,460.7 439.9,460.8 442.1,476.3 444.0,462.7 446.0,466.6 447.7,436.7 448.9,433.7 450.1,429.9 451.3,432.8 452.6,437.4 453.8,428.1 455.0,417.4 456.2,428.9 457.5,440.7 458.7,443.2 459.9,444.8 461.1,446.3 462.3,447.3 463.6,442.4 464.8,437.9 466.0,431.4 467.2,424.2 468.5,422.9 469.7,420.0 470.9,417.5 472.1,412.8 473.3,410.2 474.6,408.1 476.3,412.6 478.2,424.8 479.5,422.6 480.7,421.7 481.9,427.0 483.1,435.3 484.4,439.3 485.6,444.0 486.8,444.5 488.0,447.7 489.2,447.7 490.5,449.6 491.7,445.3 492.9,440.7 494.1,449.5 495.4,455.2 496.6,461.0 497.8,467.0 499.0,471.3 500.2,472.5 501.5,466.6 502.7,462.3 503.9,466.0 505.1,469.4 506.4,473.7 507.6,478.5 508.8,472.4 510.0,466.1 511.2,463.4 512.5,457.4 513.7,460.7 514.9,467.6 516.1,459.3 517.4,448.9 518.6,460.4 519.8,467.3 521.0,474.1 522.2,476.1 523.5,479.7 524.7,481.8 525.9,476.9 527.1,471.9 528.4,468.7 529.6,462.5 530.8,464.9 532.0,468.7 533.3,469.4 534.5,470.3 535.7,469.2 536.9,467.1 538.1,466.3 539.4,465.4 540.6,473.2 541.8,482.1 543.0,484.9 544.3,486.5 545.5,489.8 546.7,494.6 547.9,495.6 549.1,499.0 550.4,501.2 551.6,501.0 552.8,500.2 554.0,496.9 555.3,498.0 556.5,496.4 557.7,495.7 558.9,499.0 560.1,495.3 561.4,494.5 562.6,498.0 563.8,503.5 565.0,496.6 566.3,488.8 567.5,480.7 568.7,471.5 569.9,479.9 571.1,486.5 572.4,489.2 573.6,490.0 574.8,484.7 576.0,475.5 577.3,480.2 578.5,489.0 579.7,491.3 580.9,493.1 582.2,485.9 583.4,482.4 584.6,480.2 585.8,480.3 587.0,482.7 588.3,486.8 589.5,481.2 590.7,476.1 591.9,481.6 593.2,484.5 594.4,486.9 595.6,486.9 596.8,483.4 598.0,480.8 599.3,488.2 600.5,495.9 601.7,496.6 602.9,499.0 604.2,493.0 605.4,486.3 606.6,481.8 607.8,476.6 609.0,481.8 610.3,486.9 611.5,483.9 612.7,478.8 613.9,473.8 615.2,472.5 616.4,476.8 617.6,482.1 618.8,477.3 620.0,476.5 621.3,478.0 622.5,478.4 623.7,484.7 624.9,491.7 626.2,496.2 627.4,499.5 628.6,495.3 629.8,493.1 631.1,490.7 632.3,486.9 633.5,491.6 634.7,495.6 635.9,498.3 637.2,499.1 638.4,495.6 639.6,491.1 640.8,494.1 642.1,496.7 643.3,494.4 644.5,492.9 645.7,496.6 646.9,498.9 648.2,495.1 649.4,491.8 650.6,493.2 651.8,496.2 652.8,506.6 654.3,474.3 655.8,508.3 656.9,506.8 658.8,502.1 660.6,499.7 660.6,499.7 662.0,474.3 663.5,495.7 664.3,494.2 665.5,496.9 666.7,499.6 668.3,500.8 669.8,474.3 671.2,503.9 672.2,504.2 674.0,507.5 675.9,511.8 676.1,512.0 677.5,474.3 679.0,512.9 679.5,512.6 681.4,510.8 683.2,510.5 683.8,509.9 685.3,474.3 686.8,511.3 686.9,511.4 688.7,510.7 690.5,507.2 691.6,506.3 693.0,474.3 694.5,508.2 696.0,511.3 697.9,513.9 699.3,513.9 700.8,474.3 702.2,514.5 703.4,513.8 705.2,515.2 707.0,517.5 707.1,517.5 708.5,474.3 710.0,519.7 710.7,520.4 711.9,522.9 713.2,524.2 714.8,519.4 716.3,474.3 717.8,516.8 718.7,515.3 720.5,516.2 722.3,510.8 722.6,510.4 724.0,474.3 725.5,505.9 726.0,505.1 727.8,503.3 729.7,506.2 730.3,506.3 731.8,474.3 733.2,509.6 733.3,509.7 735.2,512.3 737.0,512.3 738.1,514.2 739.5,474.3 741.0,514.5 742.5,514.1 744.3,517.0 745.8,517.7 747.3,474.3 748.8,521.0 749.8,522.6 751.7,519.6 753.5,521.0 753.6,521.2 755.0,474.3 756.5,524.3 757.2,524.4 759.0,525.1 760.8,526.7 761.3,526.1 762.8,474.3 764.2,521.7 764.5,521.3 766.3,518.6 768.2,516.3 769.1,515.6 770.5,474.3 772.0,511.7 773.7,514.1 775.5,518.8 776.8,515.4 778.3,474.3 779.8,506.6 781.0,504.3 782.8,500.4 784.1,494.9 784.6,492.4 786.0,474.3 787.5,476.8 787.7,475.6 788.9,475.7 790.2,472.0 791.4,477.1 792.3,478.2 793.8,474.3 795.2,498.0 796.3,502.1 797.5,503.5 799.3,501.4 800.1,500.3 801.5,474.3 803.0,501.0 803.0,501.0 804.8,501.6 806.1,503.7 807.3,505.3 807.8,504.0 809.2,474.3 810.7,495.8 811.0,495.7 812.2,493.9 813.4,489.5 814.6,482.1 815.5,479.7 816.9,474.3 818.4,480.4 819.5,480.1 820.7,477.8 822.0,474.8 823.2,485.4 823.2,485.5 824.6,474.3 826.1,495.2 826.8,496.8 828.1,493.5 829.3,489.1 830.5,488.0 830.9,485.9 832.4,474.3 833.8,483.3 834.2,483.2 835.4,484.0 836.6,488.5 837.8,489.7 838.6,489.8 840.1,474.3 841.5,503.8 841.5,503.8 842.7,507.6 844.0,513.6 845.2,515.1 846.3,517.8 847.8,474.3 849.2,526.4 850.1,528.9 851.3,532.5 852.5,529.9 853.7,527.9 854.0,528.3 855.5,474.3 856.9,528.0 857.4,527.4 858.6,522.5 859.9,526.3 861.1,527.8 861.7,526.4 863.2,474.3 864.6,520.8 864.7,520.4 866.0,519.1 867.2,510.4 868.4,501.9 869.4,502.4 870.9,474.3 872.4,508.0 873.3,507.2 874.5,507.7 875.7,509.7 877.0,507.4 877.2,507.2 878.6,474.3 880.1,503.3 880.6,503.4 882.1,501.7 883.6,499.7 884.9,499.6 886.3,474.3 887.8,495.0 888.3,494.7 890.0,494.2 891.6,490.4 892.6,489.4 894.0,474.3 895.5,484.1 896.5,480.5 897.7,478.7 898.9,478.2 900.1,474.2 900.3,474.2 901.7,474.3 903.2,471.1 903.8,471.6 905.0,475.4 906.3,475.5 907.5,473.5 908.0,472.2 909.5,474.3 910.9,466.9 911.1,466.1 912.4,471.1 913.6,476.3 914.8,479.3 915.7,480.5 917.2,474.3 918.6,470.9 919.7,469.1 920.9,465.9 922.2,469.0 923.4,470.4 923.4,470.7 924.9,474.3 926.3,485.6 927.0,483.7 928.3,480.5 929.5,480.2 930.7,478.2 931.1,479.0 932.6,474.3 934.0,487.8 934.4,488.7 935.6,489.9 936.8,484.1 938.0,478.2 938.8,473.8 940.3,474.3 941.7,461.7 942.9,456.2 944.2,451.9 945.4,451.1 946.5,449.3 948.0,474.3 949.5,455.5 950.3,454.2 951.5,451.9 952.7,455.3 953.9,459.0 954.3,459.3 955.7,474.3 957.2,465.8 957.6,467.1 958.8,466.1 960.0,465.0 961.3,460.7 962.0,460.4 963.4,474.3 964.9,461.4 964.9,461.5 966.2,461.0 967.4,470.8 968.6,478.9 969.7,476.9 971.1,474.3 972.6,473.9 973.5,473.4 974.7,472.6 975.9,470.0 977.2,470.0 977.4,469.7 978.8,474.3 980.3,470.0 980.8,471.2 982.1,469.8 983.3,466.3 984.5,469.1 985.1,468.7 986.5,474.3 988.0,471.7 988.2,472.1 989.4,473.0 990.6,474.3 991.8,471.7 992.8,471.8 994.3,474.3 995.7,477.0 996.7,478.7 997.9,481.8 999.2,479.2 1000.4,478.2 1000.5,478.0 1002.0,474.3 1003.4,476.8 1004.1,476.7 1005.3,478.2 1006.5,478.9 1007.7,480.9 1008.2,480.9 1009.7,474.3 1011.1,484.0 1011.4,484.1 1012.6,485.8 1013.8,482.5 1015.1,481.2 1015.9,482.5 1017.4,474.3 1018.8,488.3 1020.0,489.9 1021.8,487.9 1023.6,490.7 1023.6,490.6 1025.1,474.3 1026.5,483.0 1027.3,481.5 1028.5,477.0 1029.7,475.9 1031.0,474.7 1031.4,474.4 1032.8,474.3 1034.3,471.9 1034.6,471.1 1035.8,473.0 1037.1,471.9 1038.3,471.2 1039.1,473.3 1040.5,474.3 1042.0,476.5 1043.2,475.2 1044.4,474.1 1045.6,471.3 1046.8,471.8 1048.2,474.3 1049.7,466.5 1050.5,465.4 1051.7,463.0 1053.0,463.8 1054.2,467.0 1054.5,467.2 1055.9,474.3 1057.4,468.3 1057.8,468.0 1059.1,466.3 1060.3,467.1 1061.5,469.0 1062.2,469.7 1063.7,474.3 1065.1,469.2 1065.2,469.0 1066.4,467.4 1067.6,467.2 1068.9,464.9 1069.9,466.2 1071.4,474.3 1072.8,465.1 1073.7,464.0 1075.0,462.6 1076.2,462.8 1077.4,462.7 1077.6,463.1 1079.1,474.3 1080.5,466.1 1081.1,466.3 1082.3,466.8 1083.5,471.3 1084.7,474.6 1085.3,476.3 1086.8,474.3 1088.2,479.8 1088.4,480.0 1089.6,483.0 1090.9,483.6 1092.1,487.7 1093.0,486.4 1094.5,474.3 1095.9,479.1 1097.0,477.6 1098.2,476.3 1099.9,478.5 1100.8,477.8 1102.2,474.3 1103.7,478.0 1104.5,477.3 1106.0,477.2 1107.5,474.1 1108.5,473.9 1109.9,474.3 1111.4,472.5 1112.1,473.1 1113.6,469.6 1115.2,470.9 1116.2,470.8 1117.6,474.3 1119.1,468.3 1119.8,466.8 1121.3,468.2 1122.8,465.3 1123.9,464.7 1125.3,474.3 1126.8,464.1 1127.4,464.9 1128.9,464.6 1130.4,461.3 1131.6,460.5 1133.0,474.3 1134.5,461.4 1135.0,462.2 1136.5,459.7 1138.1,457.1 1139.6,454.9 1141.1,455.7 1142.3,454.9 1143.6,452.1 1144.8,448.4 1146.0,445.9 1147.0,444.7 1148.5,474.3 1149.9,448.9 1150.9,450.6 1152.1,451.1 1153.3,447.9 1154.6,448.5 1154.7,448.9 1156.2,474.3 1157.6,447.3 1158.2,446.6 1159.5,448.7 1160.7,450.6 1161.9,449.4 1162.4,448.2 1163.9,474.3 1165.3,448.8 1165.6,449.6 1166.8,450.5 1168.0,451.5 1169.2,447.9 1170.1,448.2 1171.6,474.3 1173.0,446.4 1174.1,443.4 1175.4,443.4 1176.6,437.9 1177.8,436.4 1177.8,436.3 1179.3,474.3 1180.8,429.8 1181.5,428.5 1182.7,427.0 1183.9,427.2 1185.1,424.6 1185.6,423.1 1187.0,474.3 1188.5,414.3 1188.8,413.4 1190.0,411.7 1191.2,408.5 1192.5,404.7 1193.3,406.7 1194.7,474.3 1196.2,403.5 1197.4,403.0 1198.6,396.0 1199.8,387.6 1201.0,385.6 1202.4,474.3 1203.9,382.9 1204.7,383.1 1205.9,382.4 1207.1,383.3 1208.4,382.9 1208.7,382.6 1210.1,474.3 1211.6,380.9 1212.0,380.6 1213.3,380.6 1214.5,377.4 1215.7,380.1 1216.9,379.8 1218.1,384.7 1219.4,387.7 1220.6,379.3 1221.8,370.9 1223.0,371.7 1224.3,373.5 1225.5,369.0 1226.7,363.2 1227.9,358.8 1229.1,355.4 1230.4,360.1 1231.6,365.5 1232.8,359.4 1234.0,354.8 1235.3,356.5 1236.5,358.6 1237.7,347.5 1238.9,338.3 1240.1,335.9 1241.4,333.9 1242.6,330.2 1243.8,329.7 1245.0,324.6 1246.3,322.1 1247.5,316.6 1248.7,316.7 1249.9,318.2 1251.1,319.2 1252.4,325.9 1253.6,331.5 1254.8,335.2 1256.0,337.7 1257.3,336.7 1258.5,335.1 1259.7,340.6 1260.9,343.7 1262.2,347.0 1263.4,350.5 1264.6,345.4 1265.8,342.0 1267.0,347.9 1268.3,350.9 1269.5,356.0 1270.7,357.4 1271.9,358.6 1273.2,362.9 1274.4,359.7 1275.6,358.0 1276.8,368.1 1278.0,360.3 1279.3,345.7 1280.5,347.3 1281.7,348.6 1282.9,344.8 1284.2,341.6 1285.4,341.9 1286.6,338.1 1287.8,340.1 1289.0,341.0 1290.3,344.0 1291.5,345.2 1292.7,340.4 1293.9,337.5 1295.2,338.0 1296.4,336.3 1297.6,337.5 1298.8,337.5 1300.0,333.4 1301.3,328.5 1302.5,326.1 1303.7,326.0 1304.9,326.0 1306.2,324.3 1307.4,326.4 1308.6,329.2 1309.8,333.1 1311.1,338.7 1312.3,335.1 1313.5,331.6 1314.7,327.6 1315.9,323.9 1317.2,321.4 1318.4,318.8 1319.6,324.0 1320.8,324.3 1322.1,320.8 1323.3,317.8 1324.5,319.4 1325.7,318.3 1326.9,316.2 1328.2,312.2 1329.4,316.3 1330.6,317.3 1331.8,316.3 1333.1,313.6 1334.3,314.5 1335.5,316.8 1336.7,316.0 1337.9,313.7 1339.2,311.4 1340.4,309.1 1341.6,305.7 1342.8,302.2 1344.1,299.2 1345.3,296.5 1346.5,303.4 1347.7,307.7 1348.9,308.0 1350.2,309.9 1351.4,317.2 1352.6,324.3 1353.8,328.2 1355.1,331.0 1356.3,325.9 1357.5,319.6 1358.7,329.1 1360.0,342.1 1361.2,354.4 1362.4,350.5 1363.6,344.6 1364.8,350.5 1366.1,355.6 1367.3,360.0 1368.5,365.2 1369.7,368.1 1371.0,370.4 1372.2,366.3 1373.4,359.7 1374.6,358.3 1375.8,352.0 1377.1,346.0 1378.3,341.5 1379.5,335.5 1380.7,329.0 1382.0,328.1 1383.2,327.6 1384.4,331.0 1385.6,336.3 1386.8,337.4 1388.1,338.8 1389.3,340.2 1390.5,343.6 1391.7,344.8 1393.0,346.3 1394.2,352.2 1395.4,360.9 1396.6,367.9 1397.8,373.2 1399.1,373.7 1400.3,375.1 1401.5,372.6 1402.7,370.8 1404.0,363.6 1405.2,353.3 1406.4,350.2 1407.6,348.6 1408.9,349.9 1410.1,350.5 1411.3,345.2 1412.5,341.1 1413.7,335.8 1415.0,328.3 1416.2,325.3 1417.4,324.3 1418.6,325.1 1419.9,329.0 1421.1,325.6 1422.3,321.5 1423.5,319.2 1424.7,319.1 1426.0,321.2 1427.2,324.2 1428.4,321.9 1429.6,322.1 1430.9,317.3 1432.1,316.6 1433.3,317.9 1434.5,319.6 1435.7,311.1 1437.0,304.7 1438.4,298.9 1439.9,295.0 1442.1,308.0 1443.5,301.3 1444.8,296.5 1446.2,294.6 1447.6,295.4 1448.9,303.8 1450.3,309.9 1451.6,318.8 1453.0,330.5 1454.3,322.7 1455.7,313.2 1457.1,308.7 1458.4,302.2 1459.8,304.4 1461.1,307.9 1462.5,310.6 1463.9,317.3 1465.2,320.1 1466.6,319.8 1467.9,315.9 1469.3,309.7 1470.7,306.5 1472.0,305.8 1473.4,306.3 1474.7,307.2 1476.1,305.2 1477.4,301.7 1478.8,300.6 1480.2,299.2 1481.5,298.3 1482.9,298.6 1484.2,302.9 1485.6,307.2 1487.0,310.3 1488.3,313.7 1489.7,314.8 1491.0,312.7 1492.4,315.5 1493.8,320.5 1495.1,322.6 1496.5,324.6 1497.8,322.6 1499.2,317.5 1500.5,316.5 1501.9,314.0 1503.3,312.0 1504.6,312.6 1506.0,317.9 1507.3,323.7 1508.7,328.4 1510.1,334.5 1511.4,340.3 1512.8,335.2 1514.1,332.0 1515.5,335.5 1516.8,337.1 1518.2,335.7 1519.6,336.2 1520.9,333.3"/>
<polyline fill="none" stroke="#f3a040" stroke-width="2" stroke-opacity="0.86" stroke-linejoin="miter" stroke-miterlimit="10" points="85.6,474.3 416.9,474.3 418.6,450.8 419.9,455.1 421.1,458.1 422.3,456.7 423.5,455.3 424.7,459.2 426.0,463.7 427.2,459.3 428.4,455.1 429.6,454.2 430.9,453.5 432.1,452.3 433.3,450.1 434.5,448.2 435.7,443.8 437.0,435.6 438.2,425.6 439.9,423.1 441.6,422.5 442.8,416.3 444.0,410.8 445.2,407.0 446.5,403.6 447.7,399.0 448.9,396.2 450.4,391.6 451.8,385.9 453.1,378.3 454.3,367.0 456.2,346.5 458.2,378.6 459.9,373.6 461.1,383.4 462.3,393.5 464.1,403.7 465.3,401.2 466.5,398.2 467.7,396.2 468.9,395.8 470.2,394.3 471.4,389.5 472.6,394.5 473.8,398.7 475.8,402.6 477.8,394.8 479.0,399.3 480.2,399.9 481.7,398.1 483.1,396.0 484.4,392.7 485.6,391.4 486.8,384.9 488.0,378.2 489.5,377.4 491.0,374.3 492.2,382.4 493.4,389.4 494.6,394.0 495.8,398.5 497.1,394.6 498.3,393.9 499.5,390.5 500.7,388.5 502.7,379.5 504.6,394.3 506.1,393.6 507.6,394.2 508.8,397.4 510.0,405.1 512.0,414.5 513.7,409.0 514.9,413.8 516.1,417.1 517.4,419.5 518.6,426.8 519.8,423.9 521.0,422.3 522.2,425.2 523.5,425.9 524.7,428.0 525.9,430.4 527.1,433.8 528.4,437.2 529.6,433.4 530.8,429.3 532.0,430.8 533.3,430.7 534.5,431.0 535.7,428.3 536.9,429.6 538.1,429.3 539.4,427.7 540.6,427.0 542.3,419.6 544.3,425.3 546.2,416.1 547.9,400.2 549.6,412.7 550.9,411.9 552.1,410.6 553.3,411.7 554.5,412.2 556.5,415.6 558.4,408.8 559.7,410.0 560.9,412.9 562.1,417.9 563.3,420.5 564.5,423.2 565.8,428.3 567.2,427.6 568.7,423.9 569.9,423.8 571.1,426.5 572.4,429.5 573.6,432.5 574.8,436.7 576.0,437.1 577.3,438.4 578.5,435.7 579.7,437.3 580.9,440.3 582.2,438.8 583.4,435.6 584.6,434.9 585.8,434.0 587.0,429.8 588.3,425.6 590.2,422.8 591.4,425.7 592.7,428.1 594.1,424.1 595.6,420.8 596.8,418.0 598.0,415.4 599.3,411.7 600.5,408.0 602.4,399.5 603.7,405.2 604.9,411.1 606.6,408.1 607.8,412.3 609.0,416.5 610.3,415.2 611.5,419.9 613.3,420.7 615.2,420.7 616.4,420.1 617.6,419.0 618.8,416.9 620.0,413.3 621.3,416.8 622.5,422.9 623.7,423.3 624.9,423.9 626.2,426.5 627.4,428.9 628.6,430.2 629.8,430.1 631.1,429.1 632.3,428.3 633.5,424.1 634.7,422.9 635.9,424.6 637.2,424.6 638.4,427.6 639.6,426.9 640.8,428.0 642.1,428.9 644.0,437.9 645.2,434.5 646.5,427.7 647.7,431.4 648.9,430.7 650.4,427.9 651.8,422.2 653.1,422.5 654.3,422.3 655.7,418.5 657.2,415.7 659.2,424.5 660.4,425.5 661.6,426.5 662.8,425.2 664.1,421.0 665.3,419.5 666.5,420.6 667.7,417.6 668.9,419.0 670.4,420.4 671.9,423.0 673.8,433.0 675.1,437.2 676.3,441.6 677.5,437.1 678.7,435.6 680.0,437.6 681.2,437.1 682.4,435.8 683.6,435.6 684.8,440.8 686.1,442.8 687.3,447.1 688.5,448.1 689.7,446.7 691.0,444.3 692.2,445.1 693.4,444.5 694.6,442.1 695.8,443.2 697.8,438.1 699.0,441.1 700.2,443.9 701.7,445.9 703.2,443.6 704.4,446.7 705.6,451.2 706.8,453.3 708.1,455.4 709.3,454.2 710.5,456.5 711.7,460.0 713.0,461.5 714.8,461.2 716.6,461.7 717.8,457.6 719.1,451.1 720.3,451.8 721.5,453.0 722.7,451.3 724.0,449.9 725.2,447.5 726.4,444.0 728.0,442.8 729.6,439.0 730.8,441.2 732.0,444.9 733.3,447.1 734.5,447.4 735.9,445.8 737.4,441.2 738.6,444.2 739.9,445.7 741.1,446.1 742.3,443.4 743.5,447.7 744.7,448.9 746.0,449.8 747.2,451.3 748.7,449.1 750.1,443.1 751.7,446.7 753.3,449.7 754.5,449.2 755.7,448.3 757.0,449.5 758.2,450.7 759.9,448.6 760.8,447.2 762.0,447.4 763.2,445.6 764.4,442.5 765.7,441.8 766.9,439.5 768.1,433.9 769.3,432.2 770.6,431.5 771.8,435.6 773.0,438.4 774.2,436.2 775.5,432.3 776.7,428.0 777.9,428.7 779.1,431.9 780.3,435.1 781.6,435.6 782.8,436.1 784.0,438.0 785.2,436.1 786.5,437.1 787.7,438.3 788.9,442.2 790.1,436.4 791.3,436.1 792.6,432.8 793.8,430.1 795.3,433.7 796.7,434.6 797.9,433.5 799.2,436.7 800.4,436.8 801.6,435.7 802.8,438.6 804.1,440.0 805.3,442.2 806.5,443.4 807.3,444.3 808.5,448.7 809.7,452.5 811.0,452.4 812.2,457.6 813.4,460.4 814.6,460.6 815.8,462.1 817.1,465.4 818.3,461.9 819.5,463.5 820.7,467.7 822.0,466.4 823.2,471.3 824.4,475.2 825.6,472.9 826.8,472.1 828.1,477.7 829.3,481.1 830.5,485.1 831.7,489.0 833.0,499.6 834.2,508.4 835.4,496.1 836.6,489.0 837.8,483.8 839.1,486.8 840.3,487.7 841.5,478.8 842.7,471.4 844.0,471.1 845.2,465.0 846.4,461.5 847.6,455.8 848.9,460.9 850.1,463.5 851.3,466.3 852.5,465.9 853.7,463.8 855.0,462.3 856.2,455.0 857.4,452.7 858.6,455.0 859.9,456.8 861.1,459.2 862.3,459.2 863.5,455.6 864.7,455.6 866.0,458.0 867.2,459.7 868.4,461.6 869.6,464.0 870.9,468.6 872.1,468.6 873.3,468.6 874.5,471.1 875.7,474.9 877.0,474.7 878.4,473.8 879.9,469.7 881.5,468.5 883.1,469.9 884.7,467.4 886.3,469.2 887.9,470.1 889.1,468.9 890.4,466.1 891.6,467.6 892.8,469.2 894.0,468.1 895.3,466.8 896.5,463.0 897.7,459.0 898.9,462.5 900.1,464.1 901.4,459.5 902.6,456.4 903.8,454.3 905.0,451.8 906.3,450.8 907.5,449.4 908.7,452.0 909.9,454.2 911.1,454.1 912.4,456.9 913.6,456.6 914.8,454.5 916.0,451.6 917.3,449.6 918.5,452.0 919.7,455.8 920.9,454.3 922.2,451.3 923.4,455.1 924.6,456.2 925.8,452.6 927.0,453.7 928.3,454.8 929.5,451.6 930.7,452.7 931.9,456.3 933.2,456.0 934.4,454.5 935.6,456.9 936.8,459.9 938.0,462.4 939.3,464.0 940.5,465.9 941.7,467.3 942.9,466.3 944.2,464.5 945.4,465.3 946.6,468.8 947.8,471.6 949.0,472.4 950.3,471.9 951.5,469.2 952.7,470.5 953.9,470.0 955.2,471.1 956.4,467.1 957.6,467.5 958.8,469.0 960.0,473.0 961.3,471.2 962.5,469.9 963.7,467.0 964.9,464.0 966.2,461.0 967.4,464.2 968.6,466.7 969.8,464.1 971.1,459.5 972.3,455.5 973.5,452.2 974.7,453.6 975.9,454.4 977.2,456.8 978.4,459.0 979.6,458.7 980.8,456.2 982.1,454.8 983.3,454.3 984.5,454.5 985.7,457.7 986.9,453.3 988.2,452.7 989.4,455.5 990.6,457.0 991.8,459.1 993.1,461.5 994.3,458.8 995.5,460.1 996.7,463.4 997.9,467.0 999.2,464.3 1000.4,463.9 1001.6,463.3 1002.8,466.9 1004.1,468.7 1005.3,468.0 1006.5,470.1 1007.7,471.7 1008.9,470.0 1010.2,471.7 1011.4,472.0 1012.6,473.5 1013.8,472.9 1015.1,475.1 1016.3,475.9 1017.5,476.6 1018.7,475.8 1020.0,474.6 1021.2,473.3 1022.4,469.5 1023.6,466.5 1024.8,463.5 1026.1,459.2 1027.3,456.7 1028.5,454.3 1029.7,452.1 1031.0,451.3 1032.2,453.6 1033.4,455.5 1034.6,456.6 1035.8,457.6 1037.1,459.1 1038.3,455.9 1039.5,454.6 1040.7,455.9 1042.0,456.7 1043.2,453.5 1044.4,451.7 1045.6,447.6 1046.8,448.9 1048.1,446.3 1049.3,442.5 1050.5,442.9 1051.7,442.1 1053.0,444.2 1054.2,449.2 1055.4,450.9 1056.6,453.3 1057.8,456.8 1059.1,459.1 1060.3,459.4 1061.5,461.5 1062.7,464.0 1064.0,466.8 1065.2,469.2 1066.4,471.0 1067.6,469.3 1068.9,470.0 1070.1,467.5 1071.3,465.9 1072.5,463.9 1073.7,461.3 1075.0,456.8 1076.2,452.1 1077.4,448.9 1078.6,448.1 1079.9,444.7 1081.1,443.8 1082.3,437.9 1083.5,432.8 1084.7,428.4 1086.0,429.4 1087.2,428.9 1088.4,427.7 1089.6,428.7 1090.9,425.1 1092.1,425.1 1093.3,422.9 1094.5,422.9 1095.7,421.5 1097.0,421.7 1098.2,422.7 1099.9,424.4 1102.0,437.1 1103.2,437.8 1104.4,441.5 1105.7,446.1 1106.9,446.1 1108.1,447.5 1109.3,449.3 1110.6,448.1 1111.8,447.1 1113.0,445.9 1114.2,444.1 1115.5,444.0 1116.7,442.2 1117.9,443.9 1119.1,442.2 1120.3,442.6 1121.6,443.9 1122.8,440.9 1124.0,439.6 1125.2,436.9 1126.5,436.8 1127.7,435.3 1128.9,434.9 1130.1,435.4 1131.3,434.7 1132.6,433.4 1133.8,432.5 1135.0,431.9 1136.2,429.1 1137.5,428.3 1138.7,427.5 1139.9,426.7 1141.1,424.0 1142.3,430.4 1143.6,431.6 1144.8,436.1 1146.0,438.6 1147.2,440.1 1148.5,440.5 1149.7,440.9 1150.9,437.2 1152.1,436.4 1153.3,438.2 1154.6,438.4 1155.8,442.0 1157.0,438.4 1158.2,436.4 1159.5,437.4 1160.7,438.9 1161.9,438.3 1163.1,440.2 1164.4,438.0 1165.6,438.9 1166.8,442.9 1168.0,446.5 1169.2,447.2 1170.5,448.3 1171.7,448.3 1172.9,447.2 1174.1,449.8 1175.4,449.1 1176.6,449.8 1177.8,450.9 1179.0,451.6 1180.2,453.1 1181.5,453.8 1182.7,455.0 1183.9,456.0 1185.1,456.3 1186.4,457.7 1187.6,454.5 1188.8,455.4 1190.0,457.4 1191.2,452.8 1192.5,453.3 1193.7,451.3 1194.9,448.8 1196.1,447.9 1197.4,446.1 1198.6,444.2 1199.8,441.4 1201.0,439.8 1202.2,435.5 1203.5,438.0 1204.7,441.4 1205.9,442.1 1207.1,444.5 1208.4,446.3 1209.6,445.9 1210.8,446.3 1212.0,445.4 1213.3,444.8 1214.5,444.1 1215.7,443.1 1216.9,441.9 1218.1,441.9 1219.4,441.6 1220.6,440.2 1221.8,440.1 1223.0,440.4 1224.3,438.5 1225.5,438.4 1226.7,437.4 1227.9,433.4 1229.1,431.7 1230.4,427.8 1231.6,425.0 1232.8,420.9 1234.0,417.4 1235.3,415.5 1236.5,415.7 1237.7,421.2 1238.9,425.8 1240.1,434.4 1241.4,439.4 1242.6,438.2 1243.8,441.7 1245.0,442.4 1246.3,444.0 1247.5,438.1 1248.7,430.8 1249.9,435.0 1251.1,439.7 1252.4,433.4 1253.6,428.6 1254.8,421.5 1256.0,416.3 1257.3,414.8 1258.5,412.9 1259.7,408.8 1260.9,404.8 1262.2,402.3 1263.4,394.7 1264.6,377.5 1265.8,384.5 1267.0,390.3 1268.3,387.7 1269.5,387.0 1270.7,385.5 1271.9,382.8 1273.2,388.6 1274.4,397.3 1275.6,394.3 1276.8,392.7 1278.0,396.0 1279.3,399.8 1280.5,403.1 1281.7,407.7 1282.9,411.1 1284.2,411.8 1285.4,408.1 1286.6,401.9 1287.8,399.9 1289.0,397.7 1290.3,403.9 1291.5,406.9 1292.7,400.9 1293.9,395.0 1295.2,390.8 1296.4,390.0 1297.6,388.1 1298.8,387.8 1300.0,391.2 1301.3,396.4 1302.5,402.3 1303.7,407.3 1304.9,402.9 1306.2,400.2 1307.4,405.6 1308.6,411.7 1309.8,410.1 1311.1,406.4 1312.3,405.2 1313.5,404.7 1314.7,403.2 1315.9,399.7 1317.2,397.7 1318.4,394.6 1319.6,394.0 1320.8,393.3 1322.1,392.9 1323.3,396.1 1324.5,391.8 1325.7,390.0 1326.9,387.8 1328.2,385.6 1329.4,382.6 1330.6,381.6 1331.8,385.8 1333.1,388.0 1334.3,385.8 1335.5,384.0 1336.7,384.1 1337.9,385.3 1339.2,387.4 1340.4,387.8 1341.6,385.7 1342.8,379.6 1344.1,378.6 1345.3,376.1 1346.5,375.0 1347.7,370.3 1348.9,366.6 1350.2,361.8 1351.4,361.9 1352.6,363.0 1353.8,367.5 1355.1,372.5 1356.3,369.8 1357.5,368.3 1358.7,373.0 1360.0,377.8 1361.2,380.1 1362.4,383.1 1363.6,374.7 1364.8,365.5 1366.1,371.2 1367.3,375.3 1368.5,376.5 1369.7,381.0 1371.0,377.1 1372.2,372.4 1373.4,371.7 1374.6,368.2 1375.8,363.9 1377.1,363.9 1378.3,362.3 1379.5,361.1 1380.7,359.7 1382.0,358.2 1383.2,360.2 1384.4,366.1 1385.6,366.8 1386.8,367.9 1388.1,369.0 1389.3,369.3 1390.5,370.6 1391.7,370.3 1393.0,369.2 1394.2,367.0 1395.4,371.2 1396.6,375.7 1397.8,377.4 1399.1,376.4 1400.3,374.6 1401.5,373.7 1402.7,368.9 1404.0,365.9 1405.2,361.3 1406.4,353.4 1407.6,359.6 1408.9,362.8 1410.1,362.1 1411.3,360.6 1412.5,358.4 1413.7,356.4 1415.0,356.0 1416.2,350.6 1417.4,346.6 1418.6,343.8 1419.9,337.5 1421.1,334.0 1422.3,330.8 1423.5,326.3 1424.7,324.6 1426.0,320.8 1427.2,326.1 1428.4,328.1 1429.6,333.0 1430.9,338.4 1432.1,343.1 1433.3,348.9 1434.5,344.9 1435.7,340.9 1437.0,338.1 1438.2,334.6 1439.9,331.3 1442.1,338.6 1443.5,337.7 1444.8,334.5 1446.2,337.0 1447.6,343.7 1448.9,342.9 1450.3,337.4 1451.6,340.4 1453.0,342.7 1454.3,340.8 1455.7,337.4 1457.1,333.4 1458.4,329.7 1459.8,334.5 1461.1,338.9 1462.5,334.5 1463.9,332.5 1465.2,330.2 1466.6,326.6 1467.9,323.9 1469.3,320.5 1471.2,308.8 1473.4,328.6 1474.7,332.0 1476.1,336.9 1477.4,341.1 1478.8,344.9 1480.2,346.6 1481.5,348.3 1482.9,345.2 1484.2,340.6 1485.6,330.8 1487.0,323.3 1489.1,316.8 1490.5,330.3 1491.8,338.1 1493.2,342.5 1494.6,346.8 1495.9,341.0 1497.3,338.7 1498.6,339.8 1500.0,340.2 1501.4,335.3 1502.7,329.5 1504.1,322.8 1505.4,321.2 1507.3,323.6 1509.2,304.7 1511.4,318.3 1512.8,315.4 1514.1,309.8 1515.5,316.3 1516.8,320.6 1519.0,313.0 1520.9,313.8"/>
</g>
<rect x="1508.0" y="293.0" width="34.0" height="16.5" rx="3" fill="#02024a" stroke="#080888" stroke-width="2"/><text x="1525.0" y="305.3" text-anchor="middle" class="lb">41,57</text>
<rect x="1508.0" y="312.1" width="34.0" height="16.5" rx="3" fill="#02024a" stroke="#080888" stroke-width="2"/><text x="1525.0" y="324.4" text-anchor="middle" class="lb">36,61</text>
<rect x="1508.0" y="351.0" width="34.0" height="16.5" rx="3" fill="#02024a" stroke="#080888" stroke-width="2"/><text x="1525.0" y="363.3" text-anchor="middle" class="lb">26,64</text>
<rect x="1508.0" y="379.3" width="34.0" height="16.5" rx="3" fill="#02024a" stroke="#080888" stroke-width="2"/><text x="1525.0" y="391.6" text-anchor="middle" class="lb">19,38</text>
<rect x="1511.0" y="416.5" width="26.0" height="16.5" rx="3" fill="#02024a" stroke="#080888" stroke-width="2"/><text x="1524.0" y="428.8" text-anchor="middle" class="lb">9,72</text>
<polygon points="1475.2,737 1477.6,731.8 1489.2,735.6 1489.4,737" fill="#ffffff" stroke="#8a8f96" stroke-width="0.8"/>
<text x="1497" y="745.2" style="font-size:17px" fill="#aeb3ba"><tspan fill="#e0a11c">my</tspan>fund.pl</text>
<rect x="207.5" y="709" width="40" height="12" fill="#cd883c" stroke="#f3a040" stroke-width="2"/><text x="253.5" y="718.1" class="lg">Xetra-Gold (4GLD.SG)</text>
<rect x="385.0" y="709" width="40" height="12" fill="#cc91d2" stroke="#f3a8f3" stroke-width="2"/><text x="431.0" y="718.1" class="lg">iShares Edge MSCI World Momentum Factor UCITS ETF (Acc) (IS3R.DE)</text>
<rect x="836.0" y="709" width="40" height="12" fill="#cca332" stroke="#f3c038" stroke-width="2"/><text x="882.0" y="718.1" class="lg">iShares MSCI ACWI UCITS ETF (Acc) (IUSQ.DE)</text>
<rect x="1158.2" y="709" width="40" height="12" fill="#c858d0" stroke="#ee66ee" stroke-width="2"/><text x="1204.2" y="718.1" class="lg">ETFBM40TR</text>
<rect x="1284.0" y="709" width="40" height="12" fill="#0c3cc3" stroke="#0e46e6" stroke-width="2"/><text x="1330.0" y="718.1" class="lg">ETFBS80TR</text>
<text x="802.5" y="39.5" text-anchor="middle" class="tt">Momentum 12 miesięczne</text>
<text class="ya" text-anchor="middle" transform="translate(37.2,357.3) rotate(-90)">Zmiana [%]</text>
</svg>
</body></html>
